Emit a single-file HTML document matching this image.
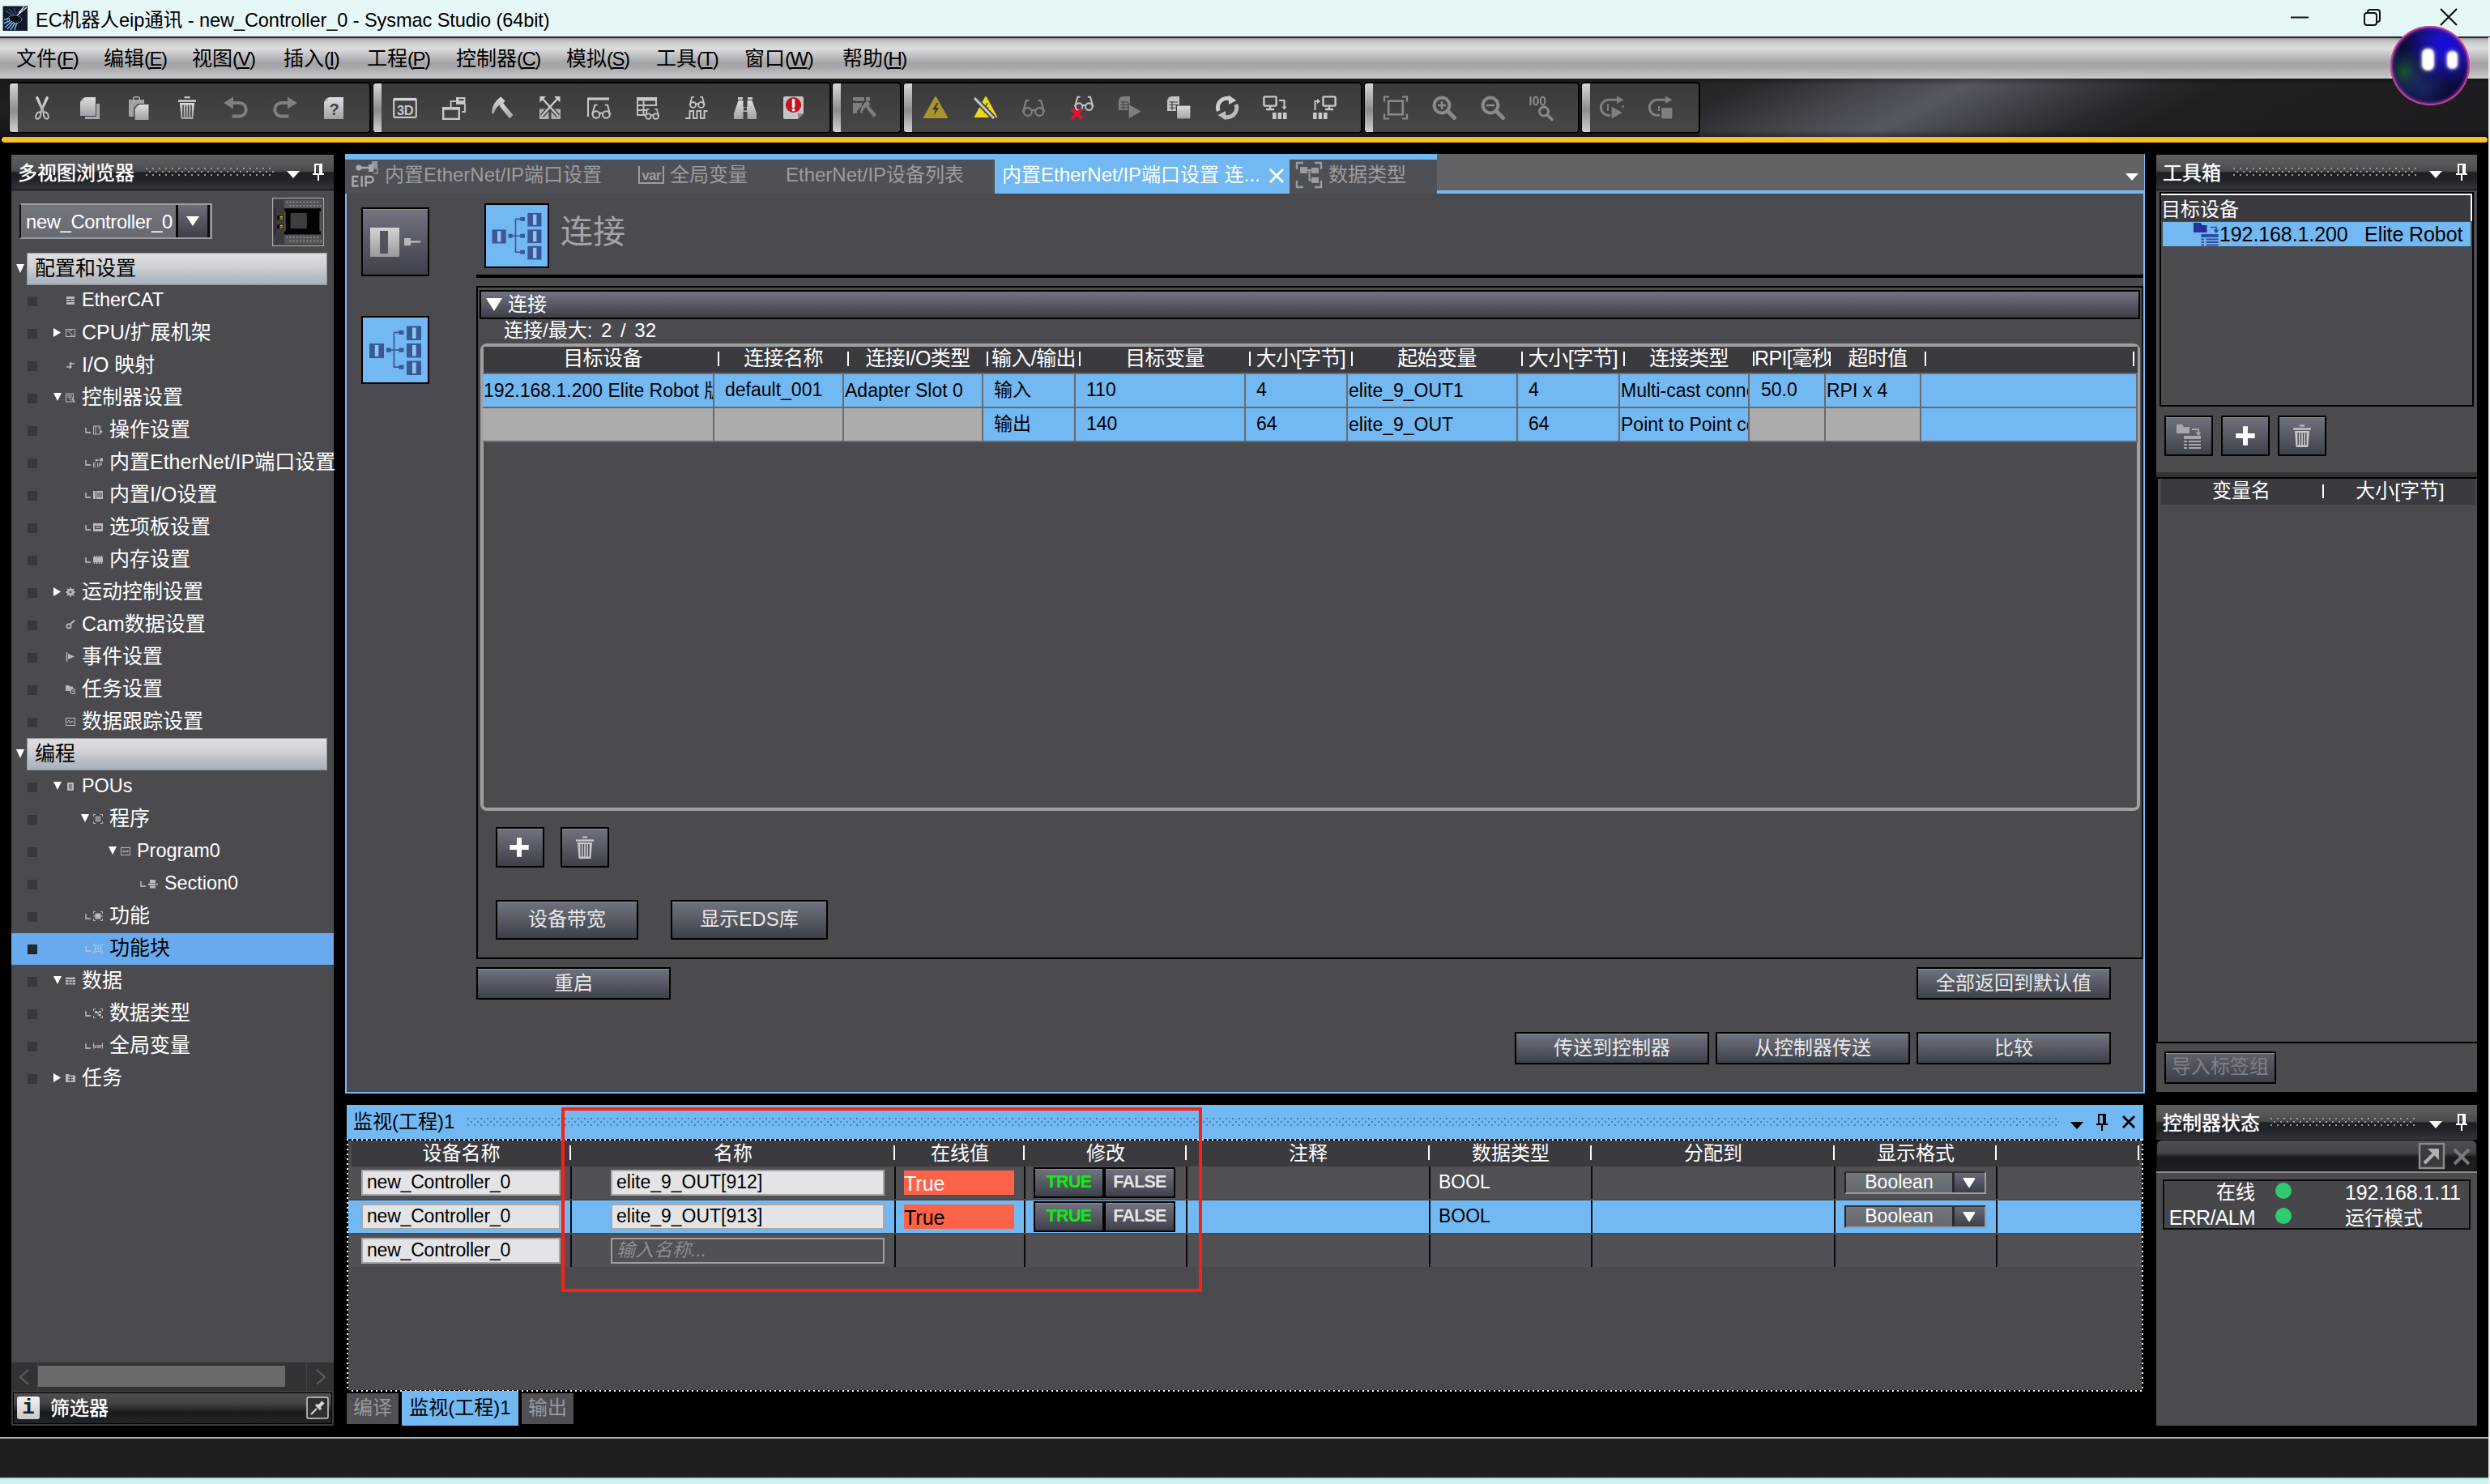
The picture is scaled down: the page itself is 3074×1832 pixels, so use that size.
<!DOCTYPE html>
<html lang="zh-CN"><head><meta charset="utf-8"><title>Sysmac Studio</title>
<style>
html,body{margin:0;padding:0;}
body{width:3074px;height:1832px;background:#000;overflow:hidden;position:relative;font-family:"Liberation Sans","Noto Sans CJK SC",sans-serif;font-size:24px;color:#fff;}
div,svg,span.a{position:absolute;box-sizing:border-box;}
.t{white-space:nowrap;overflow:visible;}
.c{text-align:center;}
.btn{background:linear-gradient(#70727e,#5a5c67 45%,#3e4049);border:2px solid #000;box-shadow:inset 0 1px 0 #8a8c98;color:#e8e8e8;text-align:center;white-space:nowrap;}
.hdr{background:linear-gradient(#5d5d61 0%,#56575a 25%,#494a4d 47%,#1c2022 52%,#22262a 75%,#32363a 100%);}

.sq{background:#38383c;width:12px;height:12px;}
.tree{font-size:24.6px;color:#fff;}
.gh{font-size:24px;color:#fff;text-align:center;}
.cell{color:#000;font-size:23px;overflow:hidden;white-space:nowrap;}
.inp{background:#e4e4e6;border:2px solid #a8a8a8;color:#000;font-size:23px;white-space:nowrap;overflow:hidden;}
</style></head><body>
<div style="left:0px;top:0px;width:3074px;height:46px;background:#e6f7f8;"></div>
<svg style="left:3px;top:7px;" width="31" height="31" viewBox="0 0 31 31"><rect x="0.5" y="0.5" width="31" height="31" fill="#10182a" stroke="#8a8f98"/>
<ellipse cx="15" cy="17" rx="9" ry="5" fill="#06080c" stroke="#5a7fb8" stroke-width="1"/>
<path d="M3 27 L12 19 M6 29 L14 20 M10 30 L16 21 M15 30 L18 21 M2 22 L10 18 M2 17 L9 16" stroke="#7fb4ea" stroke-width="1.4"/>
<path d="M30 2 L18 12 M27 1 L20 9" stroke="#dfe8f2" stroke-width="1.2"/>
<path d="M4 6 L12 12 M8 4 L14 11 M14 3 L17 10" stroke="#3a5a8a" stroke-width="1.2"/></svg>
<div class="t" style="left:44px;top:3px;height:44px;line-height:44px;color:#000;font-size:23.6px;letter-spacing:-0.1px;">EC机器人eip通讯 - new_Controller_0 - Sysmac Studio (64bit)</div>
<svg style="left:2820px;top:5px;" width="240" height="36" viewBox="0 0 240 36"><path d="M8 16.5 H30" stroke="#111" stroke-width="2"/>
<rect x="99" y="11" width="15" height="15" rx="3" fill="none" stroke="#111" stroke-width="2"/>
<path d="M103 11 V10 a3 3 0 0 1 3 -3 H115 a3 3 0 0 1 3 3 V19 a3 3 0 0 1 -3 3 H114" fill="none" stroke="#111" stroke-width="2"/>
<path d="M193 6 L213 26 M213 6 L193 26" stroke="#111" stroke-width="2.2"/></svg>
<div style="left:0px;top:45px;width:3074px;height:3px;background:#2a2a2c;"></div>
<div style="left:0px;top:47px;width:3072px;height:50px;background:linear-gradient(#8c8c8f 0%,#b9b9bc 4%,#d2d2d4 14%,#dcdcde 26%,#c0c0c3 44%,#a4a4a8 62%,#a6a6aa 70%,#bcbcbf 88%,#cbcbcd 100%);"></div>
<div class="t" style="left:20px;top:48px;height:48px;line-height:48px;color:#000;font-size:25px;">文件<span style="font-size:24px;letter-spacing:-1.5px;">(<u>F</u>)</span></div>
<div class="t" style="left:128px;top:48px;height:48px;line-height:48px;color:#000;font-size:25px;">编辑<span style="font-size:24px;letter-spacing:-1.5px;">(<u>E</u>)</span></div>
<div class="t" style="left:237px;top:48px;height:48px;line-height:48px;color:#000;font-size:25px;">视图<span style="font-size:24px;letter-spacing:-1.5px;">(<u>V</u>)</span></div>
<div class="t" style="left:350px;top:48px;height:48px;line-height:48px;color:#000;font-size:25px;">插入<span style="font-size:24px;letter-spacing:-1.5px;">(<u>I</u>)</span></div>
<div class="t" style="left:453px;top:48px;height:48px;line-height:48px;color:#000;font-size:25px;">工程<span style="font-size:24px;letter-spacing:-1.5px;">(<u>P</u>)</span></div>
<div class="t" style="left:563px;top:48px;height:48px;line-height:48px;color:#000;font-size:25px;">控制器<span style="font-size:24px;letter-spacing:-1.5px;">(<u>C</u>)</span></div>
<div class="t" style="left:699px;top:48px;height:48px;line-height:48px;color:#000;font-size:25px;">模拟<span style="font-size:24px;letter-spacing:-1.5px;">(<u>S</u>)</span></div>
<div class="t" style="left:810px;top:48px;height:48px;line-height:48px;color:#000;font-size:25px;">工具<span style="font-size:24px;letter-spacing:-1.5px;">(<u>T</u>)</span></div>
<div class="t" style="left:919px;top:48px;height:48px;line-height:48px;color:#000;font-size:25px;">窗口<span style="font-size:24px;letter-spacing:-1.5px;">(<u>W</u>)</span></div>
<div class="t" style="left:1040px;top:48px;height:48px;line-height:48px;color:#000;font-size:25px;">帮助<span style="font-size:24px;letter-spacing:-1.5px;">(<u>H</u>)</span></div>
<div style="left:0px;top:97px;width:3072px;height:72px;background:linear-gradient(#1a1a1c,#202022 50%,#161618);"></div>
<div style="left:2098px;top:97px;width:974px;height:72px;background:linear-gradient(154deg,#232426 0%,#28292c 7%,#43454b 20%,#565860 31%,#3d3f45 42%,#28292c 52%,#202022 60%,#1d1d1f 100%);"></div>
<div style="left:2098px;top:97px;width:974px;height:72px;background:linear-gradient(rgba(0,0,0,.3),rgba(0,0,0,0) 12%,rgba(0,0,0,0) 88%,rgba(0,0,0,.35));"></div>
<div style="left:11px;top:101px;width:447px;height:64px;background:linear-gradient(#3a3a3a,#474747);border:2px solid #000;border-radius:5px;box-shadow:0 1px 0 #2c2c2c;"></div>
<div style="left:12px;top:103px;width:10px;height:60px;background:linear-gradient(#d6d6d6,#9a9a9a 45%,#8c8c8c 55%,#cfcfcf);border-radius:3px 0 0 3px;"></div>
<div style="left:460px;top:101px;width:566px;height:64px;background:linear-gradient(#3a3a3a,#474747);border:2px solid #000;border-radius:5px;box-shadow:0 1px 0 #2c2c2c;"></div>
<div style="left:461px;top:103px;width:10px;height:60px;background:linear-gradient(#d6d6d6,#9a9a9a 45%,#8c8c8c 55%,#cfcfcf);border-radius:3px 0 0 3px;"></div>
<div style="left:1027px;top:101px;width:86px;height:64px;background:linear-gradient(#3a3a3a,#474747);border:2px solid #000;border-radius:5px;box-shadow:0 1px 0 #2c2c2c;"></div>
<div style="left:1028px;top:103px;width:10px;height:60px;background:linear-gradient(#d6d6d6,#9a9a9a 45%,#8c8c8c 55%,#cfcfcf);border-radius:3px 0 0 3px;"></div>
<div style="left:1115px;top:101px;width:567px;height:64px;background:linear-gradient(#3a3a3a,#474747);border:2px solid #000;border-radius:5px;box-shadow:0 1px 0 #2c2c2c;"></div>
<div style="left:1116px;top:103px;width:10px;height:60px;background:linear-gradient(#d6d6d6,#9a9a9a 45%,#8c8c8c 55%,#cfcfcf);border-radius:3px 0 0 3px;"></div>
<div style="left:1684px;top:101px;width:266px;height:64px;background:linear-gradient(#3a3a3a,#474747);border:2px solid #000;border-radius:5px;box-shadow:0 1px 0 #2c2c2c;"></div>
<div style="left:1685px;top:103px;width:10px;height:60px;background:linear-gradient(#d6d6d6,#9a9a9a 45%,#8c8c8c 55%,#cfcfcf);border-radius:3px 0 0 3px;"></div>
<div style="left:1952px;top:101px;width:147px;height:64px;background:linear-gradient(#3a3a3a,#474747);border:2px solid #000;border-radius:5px;box-shadow:0 1px 0 #2c2c2c;"></div>
<div style="left:1953px;top:103px;width:10px;height:60px;background:linear-gradient(#d6d6d6,#9a9a9a 45%,#8c8c8c 55%,#cfcfcf);border-radius:3px 0 0 3px;"></div>
<div style="left:2px;top:169px;width:3069px;height:7px;background:linear-gradient(#f2b51f,#fcc32c 40%,#f7bb26);border-radius:4px;"></div>
<div style="left:2951px;top:32px;width:98px;height:98px;border-radius:50%;background:radial-gradient(circle at 70% 24%,#1a0ce0 0%,#1a10c0 14%,#14108a 30%,#0c0c3c 48%,#0a0a30 64%,#12104a 100%);"></div>
<div style="left:2951px;top:32px;width:98px;height:98px;border-radius:50%;background:radial-gradient(circle at 18% 58%,rgba(30,110,40,.75) 0%,rgba(30,80,80,.4) 14%,rgba(0,0,0,0) 30%);"></div>
<div style="left:2951px;top:32px;width:98px;height:98px;border-radius:50%;background:radial-gradient(circle at 40% 78%,rgba(40,60,140,.55) 0%,rgba(0,0,0,0) 34%);"></div>
<div style="left:2951px;top:32px;width:98px;height:98px;border-radius:50%;background:radial-gradient(closest-side,rgba(0,0,0,0) 87%,rgba(120,30,180,.4) 93%,rgba(226,70,170,.85) 98%,rgba(240,110,130,.9) 100%);"></div>
<div style="left:2951px;top:32px;width:98px;height:98px;border-radius:50%;background:linear-gradient(100deg,rgba(230,80,40,.5) 0%,rgba(0,0,0,0) 9%);"></div>
<div style="left:2990px;top:60px;width:15px;height:27px;background:#fff;border-radius:7px;filter:blur(1px);box-shadow:0 0 4px 1px rgba(255,255,255,.5);"></div>
<div style="left:3021px;top:63px;width:13px;height:22px;background:#fff;border-radius:6px;filter:blur(1px);box-shadow:0 0 4px 1px rgba(255,255,255,.5);"></div>
<div class="hdr" style="left:14px;top:191px;width:398px;height:43px;"></div>
<div class="t" style="left:22px;top:194px;height:40px;line-height:40px;font-size:24px;color:#fff;text-shadow:0 0 1px #fff;">多视图浏览器</div>
<svg style="left:180px;top:207px" width="160" height="10" viewBox="0 0 160 10"><defs><pattern id="dp1" width="8" height="8" patternUnits="userSpaceOnUse"><rect x="0" y="0" width="2" height="2" fill="#9a9a9a"/><rect x="4" y="4" width="2" height="2" fill="#9a9a9a"/></pattern></defs><rect width="160" height="10" fill="url(#dp1)"/></svg>
<svg style="left:354px;top:211px;" width="16" height="9" viewBox="0 0 16 9"><path d="M0 0 H16 L8 9 Z" fill="#fff"/></svg>
<svg style="left:386px;top:202px;" width="14" height="21" viewBox="0 0 14 21"><path d="M2 0 H12 V12 H14 V14 H8 V21 H6 V14 H0 V12 H2 Z M4 2 V12 H8 V2 Z" fill="#fff" fill-rule="evenodd"/></svg>
<div style="left:14px;top:235px;width:398px;height:1447px;background:#4b4b4f;"></div>
<div style="left:24px;top:251px;width:238px;height:44px;background:#6e7078;border:2px solid #9a9aa0;border-left-color:#0c0c0e;"></div>
<div style="left:26px;top:253px;width:191px;height:40px;background:linear-gradient(#74767e,#686a72);"></div>
<div style="left:217px;top:253px;width:3px;height:40px;background:#0c0c0e;"></div>
<div style="left:256px;top:253px;width:3px;height:40px;background:#0c0c0e;"></div>
<div style="left:220px;top:253px;width:36px;height:40px;background:linear-gradient(#6c6e7a,#3c3e48);"></div>
<svg style="left:230px;top:267px;" width="16" height="12" viewBox="0 0 16 12"><path d="M0 0 H16 L8 12 Z" fill="#fff"/></svg>
<div class="t" style="left:32px;top:253px;height:41px;line-height:41px;font-size:23.8px;color:#fff;letter-spacing:-0.35px;">new_Controller_0</div>
<svg style="left:336px;top:244px;" width="64" height="60" viewBox="0 0 64 60"><rect x="0.75" y="0.75" width="62.5" height="58.5" fill="#555558" stroke="#a9a9a9" stroke-width="1.5"/>
<rect x="2" y="2" width="60" height="56" fill="none" stroke="#2a2a2c" stroke-width="1"/>
<rect x="2.5" y="2.5" width="12.5" height="55" fill="#3c3c3e"/>
<path d="M2.5 12 L4.5 14 V45 L2.5 47 Z" fill="#2a2a2c"/>
<rect x="17.5" y="4.6" width="1.8" height="1.8" fill="#8e8e92"/><rect x="21.7" y="4.6" width="1.8" height="1.8" fill="#8e8e92"/><rect x="25.9" y="4.6" width="1.8" height="1.8" fill="#8e8e92"/><rect x="30.1" y="4.6" width="1.8" height="1.8" fill="#8e8e92"/><rect x="34.3" y="4.6" width="1.8" height="1.8" fill="#8e8e92"/><rect x="38.5" y="4.6" width="1.8" height="1.8" fill="#8e8e92"/><rect x="42.7" y="4.6" width="1.8" height="1.8" fill="#8e8e92"/><rect x="46.9" y="4.6" width="1.8" height="1.8" fill="#8e8e92"/><rect x="51.1" y="4.6" width="1.8" height="1.8" fill="#8e8e92"/><rect x="55.3" y="4.6" width="1.8" height="1.8" fill="#8e8e92"/><rect x="17.5" y="48.2" width="1.8" height="1.8" fill="#8e8e92"/><rect x="21.7" y="48.2" width="1.8" height="1.8" fill="#8e8e92"/><rect x="25.9" y="48.2" width="1.8" height="1.8" fill="#8e8e92"/><rect x="30.1" y="48.2" width="1.8" height="1.8" fill="#8e8e92"/><rect x="34.3" y="48.2" width="1.8" height="1.8" fill="#8e8e92"/><rect x="38.5" y="48.2" width="1.8" height="1.8" fill="#8e8e92"/><rect x="42.7" y="48.2" width="1.8" height="1.8" fill="#8e8e92"/><rect x="46.9" y="48.2" width="1.8" height="1.8" fill="#8e8e92"/><rect x="51.1" y="48.2" width="1.8" height="1.8" fill="#8e8e92"/><rect x="55.3" y="48.2" width="1.8" height="1.8" fill="#8e8e92"/><rect x="21.5" y="9" width="1.8" height="1.8" fill="#8e8e92"/><rect x="25.7" y="9" width="1.8" height="1.8" fill="#8e8e92"/><rect x="29.9" y="9" width="1.8" height="1.8" fill="#8e8e92"/><rect x="34.1" y="9" width="1.8" height="1.8" fill="#8e8e92"/><rect x="38.3" y="9" width="1.8" height="1.8" fill="#8e8e92"/><rect x="42.5" y="9" width="1.8" height="1.8" fill="#8e8e92"/><rect x="46.7" y="9" width="1.8" height="1.8" fill="#8e8e92"/><rect x="50.9" y="9" width="1.8" height="1.8" fill="#8e8e92"/><rect x="55.1" y="9" width="1.8" height="1.8" fill="#8e8e92"/><rect x="59.3" y="9" width="1.8" height="1.8" fill="#8e8e92"/><rect x="21.5" y="52.6" width="1.8" height="1.8" fill="#8e8e92"/><rect x="25.7" y="52.6" width="1.8" height="1.8" fill="#8e8e92"/><rect x="29.9" y="52.6" width="1.8" height="1.8" fill="#8e8e92"/><rect x="34.1" y="52.6" width="1.8" height="1.8" fill="#8e8e92"/><rect x="38.3" y="52.6" width="1.8" height="1.8" fill="#8e8e92"/><rect x="42.5" y="52.6" width="1.8" height="1.8" fill="#8e8e92"/><rect x="46.7" y="52.6" width="1.8" height="1.8" fill="#8e8e92"/><rect x="50.9" y="52.6" width="1.8" height="1.8" fill="#8e8e92"/><rect x="55.1" y="52.6" width="1.8" height="1.8" fill="#8e8e92"/><rect x="59.3" y="52.6" width="1.8" height="1.8" fill="#8e8e92"/>
<path d="M15 13.2 H60 V17 H58.4 V41.4 H60 V45.4 H15 V41.4 H16.6 V17 H15 Z" fill="#020202"/>
<rect x="22.6" y="19" width="20.2" height="19.2" fill="#3e3e40"/>
<rect x="6" y="22.4" width="7.4" height="5" fill="#0a0a0a"/><rect x="6" y="33.2" width="7.4" height="5" fill="#0a0a0a"/>
<rect x="9.4" y="23" width="3.6" height="1.6" fill="#e6c21e"/><rect x="9.4" y="25.4" width="3.6" height="1.4" fill="#c8a818"/>
<rect x="9.4" y="33.8" width="3.6" height="1.6" fill="#e6c21e"/><rect x="9.4" y="36.2" width="3.6" height="1.4" fill="#c8a818"/></svg>
<svg style="left:20px;top:326px;" width="10" height="11" viewBox="0 0 10 11"><path d="M0 0 H10 L5 11 Z" fill="#fff"/></svg>
<div style="left:33px;top:312px;width:371px;height:40px;background:linear-gradient(#dddee0,#d0d2d6 40%,#b6bcc4 75%,#a9b1bb 100%);border:1px solid #8f939a;"></div>
<div class="t" style="left:43px;top:312px;height:38px;line-height:38px;color:#000;font-size:25px;">配置和设置</div>
<div style="left:34px;top:366px;width:12px;height:12px;background:#38383c;"></div>
<svg style="left:81px;top:365px;" width="12" height="12" viewBox="0 0 12 12"><rect x="1" y="1" width="10" height="3" fill="#b9b9bd"/><rect x="1" y="5" width="4" height="2" fill="#b9b9bd"/><rect x="6" y="5" width="5" height="2" fill="#b9b9bd"/><rect x="1" y="8" width="10" height="3" fill="#b9b9bd"/></svg>
<div class="t" style="left:101px;top:350px;height:40px;line-height:40px;font-size:23.4px;color:#fff;">EtherCAT</div>
<div style="left:34px;top:406px;width:12px;height:12px;background:#38383c;"></div>
<svg style="left:81px;top:405px;" width="12" height="12" viewBox="0 0 12 12"><rect x="0.5" y="1.5" width="11" height="9" fill="none" stroke="#b9b9bd"/><path d="M2 3 L8 8 M4 3 H8 M6 9 H10" stroke="#b9b9bd"/></svg>
<svg style="left:66px;top:405px;" width="9" height="11" viewBox="0 0 9 11"><path d="M0 0 V11 L9 5.5 Z" fill="#fff"/></svg>
<div class="t" style="left:101px;top:390px;height:40px;line-height:40px;font-size:25px;color:#fff;">CPU/扩展机架</div>
<div style="left:34px;top:446px;width:12px;height:12px;background:#38383c;"></div>
<svg style="left:81px;top:445px;" width="12" height="12" viewBox="0 0 12 12"><path d="M1 8 H7 M5 6 L7 8 L5 10 M11 4 H5 M7 2 L5 4 L7 6" stroke="#b9b9bd" stroke-width="1.4" fill="none"/></svg>
<div class="t" style="left:101px;top:430px;height:40px;line-height:40px;font-size:25px;color:#fff;">I/O 映射</div>
<div style="left:34px;top:486px;width:12px;height:12px;background:#38383c;"></div>
<svg style="left:81px;top:485px;" width="12" height="12" viewBox="0 0 12 12"><rect x="0.5" y="1" width="9" height="10" fill="none" stroke="#b9b9bd"/><path d="M2 3 H8 M2 5 H6" stroke="#b9b9bd"/><circle cx="7" cy="7" r="2" fill="none" stroke="#b9b9bd"/><path d="M8.5 8.5 L11.5 11.5" stroke="#b9b9bd" stroke-width="1.5"/></svg>
<svg style="left:66px;top:485px;" width="10" height="10" viewBox="0 0 10 10"><path d="M0 0 H10 L5 10 Z" fill="#fff"/></svg>
<div class="t" style="left:101px;top:470px;height:40px;line-height:40px;font-size:25px;color:#fff;">控制器设置</div>
<div style="left:34px;top:526px;width:12px;height:12px;background:#38383c;"></div>
<svg style="left:115px;top:525px;" width="12" height="12" viewBox="0 0 12 12"><rect x="0.5" y="1" width="8" height="10" fill="none" stroke="#b9b9bd"/><path d="M3 1 V11 M5.5 3 H8" stroke="#b9b9bd"/><path d="M8 5 L12 8 L8 11 Z" fill="#b9b9bd"/></svg>
<svg style="left:105px;top:528px;" width="7" height="7" viewBox="0 0 7 7"><path d="M1 0 V6 H7" stroke="#c8c8c8" stroke-width="1.3" fill="none"/></svg>
<div class="t" style="left:135px;top:510px;height:40px;line-height:40px;font-size:25px;color:#fff;">操作设置</div>
<div style="left:34px;top:566px;width:12px;height:12px;background:#38383c;"></div>
<svg style="left:115px;top:565px;" width="12" height="12" viewBox="0 0 12 12"><path d="M5 3 H9 M9 1 h3 v3 h-3 z" stroke="#b9b9bd" fill="#b9b9bd"/><circle cx="4" cy="3" r="1.5" fill="#b9b9bd"/><path d="M0.5 6.5 H3.5 M0.5 9 H3 M0.5 11.5 H3.5 M0.5 6.5 V11.5 M5.5 6.5 V11.5 M7.5 11.5 V6.5 H10.5 V9 H7.5" stroke="#b9b9bd" fill="none"/></svg>
<svg style="left:105px;top:568px;" width="7" height="7" viewBox="0 0 7 7"><path d="M1 0 V6 H7" stroke="#c8c8c8" stroke-width="1.3" fill="none"/></svg>
<div class="t" style="left:135px;top:550px;height:40px;line-height:40px;font-size:25px;color:#fff;">内置EtherNet/IP端口设置</div>
<div style="left:34px;top:606px;width:12px;height:12px;background:#38383c;"></div>
<svg style="left:115px;top:605px;" width="12" height="12" viewBox="0 0 12 12"><rect x="0" y="1" width="3" height="10" fill="#b9b9bd"/><rect x="4" y="1" width="8" height="10" fill="#b9b9bd"/><path d="M5 4 H11 M5 6 H11 M5 8 H11" stroke="#4b4b4f"/></svg>
<svg style="left:105px;top:608px;" width="7" height="7" viewBox="0 0 7 7"><path d="M1 0 V6 H7" stroke="#c8c8c8" stroke-width="1.3" fill="none"/></svg>
<div class="t" style="left:135px;top:590px;height:40px;line-height:40px;font-size:25px;color:#fff;">内置I/O设置</div>
<div style="left:34px;top:646px;width:12px;height:12px;background:#38383c;"></div>
<svg style="left:115px;top:645px;" width="12" height="12" viewBox="0 0 12 12"><rect x="0" y="1" width="12" height="10" fill="#b9b9bd"/><rect x="2" y="4" width="8" height="4" fill="#4b4b4f"/><rect x="3.5" y="5.2" width="5" height="1.6" fill="#b9b9bd"/></svg>
<svg style="left:105px;top:648px;" width="7" height="7" viewBox="0 0 7 7"><path d="M1 0 V6 H7" stroke="#c8c8c8" stroke-width="1.3" fill="none"/></svg>
<div class="t" style="left:135px;top:630px;height:40px;line-height:40px;font-size:25px;color:#fff;">选项板设置</div>
<div style="left:34px;top:686px;width:12px;height:12px;background:#38383c;"></div>
<svg style="left:115px;top:685px;" width="12" height="12" viewBox="0 0 12 12"><rect x="0" y="3" width="12" height="6" fill="#b9b9bd"/><path d="M1.5 1 V3 M4.5 1 V3 M7.5 1 V3 M10.5 1 V3 M1.5 9 V11 M4.5 9 V11 M7.5 9 V11 M10.5 9 V11" stroke="#b9b9bd" stroke-width="1.6"/></svg>
<svg style="left:105px;top:688px;" width="7" height="7" viewBox="0 0 7 7"><path d="M1 0 V6 H7" stroke="#c8c8c8" stroke-width="1.3" fill="none"/></svg>
<div class="t" style="left:135px;top:670px;height:40px;line-height:40px;font-size:25px;color:#fff;">内存设置</div>
<div style="left:34px;top:726px;width:12px;height:12px;background:#38383c;"></div>
<svg style="left:81px;top:725px;" width="12" height="12" viewBox="0 0 12 12"><circle cx="6" cy="6" r="3.4" fill="none" stroke="#b9b9bd" stroke-width="2"/><path d="M6 0 V12 M0 6 H12 M1.8 1.8 L10.2 10.2 M10.2 1.8 L1.8 10.2" stroke="#b9b9bd" stroke-width="1.5"/><circle cx="6" cy="6" r="1.4" fill="#4b4b4f"/></svg>
<svg style="left:66px;top:725px;" width="9" height="11" viewBox="0 0 9 11"><path d="M0 0 V11 L9 5.5 Z" fill="#fff"/></svg>
<div class="t" style="left:101px;top:710px;height:40px;line-height:40px;font-size:25px;color:#fff;">运动控制设置</div>
<div style="left:34px;top:766px;width:12px;height:12px;background:#38383c;"></div>
<svg style="left:81px;top:765px;" width="12" height="12" viewBox="0 0 12 12"><circle cx="4" cy="8" r="2.6" fill="none" stroke="#b9b9bd" stroke-width="1.8"/><path d="M5 6 L11 1" stroke="#b9b9bd" stroke-width="1.8"/></svg>
<div class="t" style="left:101px;top:750px;height:40px;line-height:40px;font-size:25px;color:#fff;">Cam数据设置</div>
<div style="left:34px;top:806px;width:12px;height:12px;background:#38383c;"></div>
<svg style="left:81px;top:805px;" width="12" height="12" viewBox="0 0 12 12"><path d="M1.5 0 V12" stroke="#b9b9bd" stroke-width="1.4"/><path d="M3 2 L11 5.5 L3 9 Z" fill="#b9b9bd"/></svg>
<div class="t" style="left:101px;top:790px;height:40px;line-height:40px;font-size:25px;color:#fff;">事件设置</div>
<div style="left:34px;top:846px;width:12px;height:12px;background:#38383c;"></div>
<svg style="left:81px;top:845px;" width="12" height="12" viewBox="0 0 12 12"><path d="M0 1 H4 L5 2.5 H9 V8 H0 Z" fill="#b9b9bd"/><circle cx="9" cy="8.5" r="3" fill="#4b4b4f" stroke="#b9b9bd" stroke-width="1.2"/><path d="M9 7 V8.7 H10.4" stroke="#b9b9bd" fill="none"/></svg>
<div class="t" style="left:101px;top:830px;height:40px;line-height:40px;font-size:25px;color:#fff;">任务设置</div>
<div style="left:34px;top:886px;width:12px;height:12px;background:#38383c;"></div>
<svg style="left:81px;top:885px;" width="12" height="12" viewBox="0 0 12 12"><rect x="0.5" y="1.5" width="11" height="9" fill="none" stroke="#b9b9bd"/><path d="M2 7 L4 4 L6 8 L8 5 L10 7" stroke="#b9b9bd" fill="none"/></svg>
<div class="t" style="left:101px;top:870px;height:40px;line-height:40px;font-size:25px;color:#fff;">数据跟踪设置</div>
<svg style="left:20px;top:925px;" width="10" height="11" viewBox="0 0 10 11"><path d="M0 0 H10 L5 11 Z" fill="#fff"/></svg>
<div style="left:33px;top:911px;width:371px;height:40px;background:linear-gradient(#dddee0,#d0d2d6 40%,#b6bcc4 75%,#a9b1bb 100%);border:1px solid #8f939a;"></div>
<div class="t" style="left:43px;top:911px;height:38px;line-height:38px;color:#000;font-size:25px;">编程</div>
<div style="left:34px;top:966px;width:12px;height:12px;background:#38383c;"></div>
<svg style="left:81px;top:965px;" width="12" height="12" viewBox="0 0 12 12"><rect x="2" y="1" width="8" height="10" rx="1" fill="#b9b9bd"/><path d="M4 4 H8 M4 6 H8 M4 8 H8" stroke="#4b4b4f"/></svg>
<svg style="left:66px;top:965px;" width="10" height="10" viewBox="0 0 10 10"><path d="M0 0 H10 L5 10 Z" fill="#fff"/></svg>
<div class="t" style="left:101px;top:950px;height:40px;line-height:40px;font-size:23.4px;color:#fff;">POUs</div>
<div style="left:34px;top:1006px;width:12px;height:12px;background:#38383c;"></div>
<svg style="left:115px;top:1005px;" width="12" height="12" viewBox="0 0 12 12"><path d="M0.5 3 V0.5 H3 M9 0.5 H11.5 V3 M0.5 9 V11.5 H3 M9 11.5 H11.5 V9" stroke="#b9b9bd" fill="none"/><rect x="3" y="3" width="6" height="6" fill="#b9b9bd"/><path d="M4 5 H8 M4 7 H8" stroke="#4b4b4f"/></svg>
<svg style="left:100px;top:1005px;" width="10" height="10" viewBox="0 0 10 10"><path d="M0 0 H10 L5 10 Z" fill="#fff"/></svg>
<div class="t" style="left:135px;top:990px;height:40px;line-height:40px;font-size:25px;color:#fff;">程序</div>
<div style="left:34px;top:1046px;width:12px;height:12px;background:#38383c;"></div>
<svg style="left:149px;top:1045px;" width="12" height="12" viewBox="0 0 12 12"><rect x="0.5" y="1.5" width="11" height="9" fill="none" stroke="#b9b9bd"/><path d="M2 6 H10 M4 4.5 V7.5 M8 4.5 V7.5" stroke="#b9b9bd"/></svg>
<svg style="left:134px;top:1045px;" width="10" height="10" viewBox="0 0 10 10"><path d="M0 0 H10 L5 10 Z" fill="#fff"/></svg>
<div class="t" style="left:169px;top:1030px;height:40px;line-height:40px;font-size:23.4px;color:#fff;">Program0</div>
<div style="left:34px;top:1086px;width:12px;height:12px;background:#38383c;"></div>
<svg style="left:183px;top:1085px;" width="12" height="12" viewBox="0 0 12 12"><rect x="2" y="1" width="7" height="4" fill="#b9b9bd"/><rect x="0" y="5.5" width="9" height="2.5" fill="#b9b9bd"/><rect x="2" y="8.5" width="7" height="3" fill="#b9b9bd"/><rect x="10" y="5.5" width="2" height="2" fill="#b9b9bd"/></svg>
<svg style="left:173px;top:1088px;" width="7" height="7" viewBox="0 0 7 7"><path d="M1 0 V6 H7" stroke="#c8c8c8" stroke-width="1.3" fill="none"/></svg>
<div class="t" style="left:203px;top:1070px;height:40px;line-height:40px;font-size:23.4px;color:#fff;">Section0</div>
<div style="left:34px;top:1126px;width:12px;height:12px;background:#38383c;"></div>
<svg style="left:115px;top:1125px;" width="12" height="12" viewBox="0 0 12 12"><path d="M0.5 3 V0.5 H3 M9 0.5 H11.5 V3 M0.5 9 V11.5 H3 M9 11.5 H11.5 V9" stroke="#b9b9bd" fill="none"/><rect x="2.5" y="2.5" width="7" height="7" fill="#b9b9bd"/><path d="M0 6 H3 M9 6 H12" stroke="#b9b9bd"/></svg>
<svg style="left:105px;top:1128px;" width="7" height="7" viewBox="0 0 7 7"><path d="M1 0 V6 H7" stroke="#c8c8c8" stroke-width="1.3" fill="none"/></svg>
<div class="t" style="left:135px;top:1110px;height:40px;line-height:40px;font-size:25px;color:#fff;">功能</div>
<div style="left:14px;top:1152px;width:398px;height:39px;background:#68aaee;"></div>
<div style="left:34px;top:1166px;width:12px;height:12px;background:#26262a;"></div>
<svg style="left:115px;top:1165px;" width="12" height="12" viewBox="0 0 12 12"><path d="M0.5 3 V0.5 H3 M9 0.5 H11.5 V3 M0.5 9 V11.5 H3 M9 11.5 H11.5 V9" stroke="#9cc4ec" fill="none"/><rect x="2.5" y="2.5" width="7" height="7" fill="none" stroke="#9cc4ec" stroke-width="1.4"/><circle cx="6" cy="6" r="1.6" fill="#9cc4ec"/></svg>
<svg style="left:105px;top:1168px;" width="7" height="7" viewBox="0 0 7 7"><path d="M1 0 V6 H7" stroke="#c8c8c8" stroke-width="1.3" fill="none"/></svg>
<div class="t" style="left:135px;top:1150px;height:40px;line-height:40px;font-size:25px;color:#000;">功能块</div>
<div style="left:34px;top:1206px;width:12px;height:12px;background:#38383c;"></div>
<svg style="left:81px;top:1205px;" width="12" height="12" viewBox="0 0 12 12"><rect x="0" y="1.5" width="12" height="9" fill="#b9b9bd"/><path d="M0 4.5 H12 M0 7.5 H12 M4 4.5 V10.5 M8 4.5 V10.5" stroke="#4b4b4f"/></svg>
<svg style="left:66px;top:1205px;" width="10" height="10" viewBox="0 0 10 10"><path d="M0 0 H10 L5 10 Z" fill="#fff"/></svg>
<div class="t" style="left:101px;top:1190px;height:40px;line-height:40px;font-size:25px;color:#fff;">数据</div>
<div style="left:34px;top:1246px;width:12px;height:12px;background:#38383c;"></div>
<svg style="left:115px;top:1245px;" width="12" height="12" viewBox="0 0 12 12"><path d="M0.5 3 V0.5 H3 M9 0.5 H11.5 V3 M0.5 9 V11.5 H3 M9 11.5 H11.5 V9" stroke="#b9b9bd" fill="none"/><rect x="2" y="3" width="3" height="3" fill="#b9b9bd"/><rect x="7" y="3" width="3" height="2.5" fill="#b9b9bd"/><rect x="7" y="7" width="3" height="2.5" fill="#b9b9bd"/><path d="M5 4.5 H7 M6 4.5 V8.2 H7" stroke="#b9b9bd" fill="none"/></svg>
<svg style="left:105px;top:1248px;" width="7" height="7" viewBox="0 0 7 7"><path d="M1 0 V6 H7" stroke="#c8c8c8" stroke-width="1.3" fill="none"/></svg>
<div class="t" style="left:135px;top:1230px;height:40px;line-height:40px;font-size:25px;color:#fff;">数据类型</div>
<div style="left:34px;top:1286px;width:12px;height:12px;background:#38383c;"></div>
<svg style="left:115px;top:1285px;" width="12" height="12" viewBox="0 0 12 12"><path d="M0.5 2.5 V9.5 M11.5 2.5 V9.5" stroke="#b9b9bd"/><text x="6" y="8.6" font-size="6.5" font-weight="bold" text-anchor="middle" fill="#b9b9bd" font-family="Liberation Sans,sans-serif">var</text></svg>
<svg style="left:105px;top:1288px;" width="7" height="7" viewBox="0 0 7 7"><path d="M1 0 V6 H7" stroke="#c8c8c8" stroke-width="1.3" fill="none"/></svg>
<div class="t" style="left:135px;top:1270px;height:40px;line-height:40px;font-size:25px;color:#fff;">全局变量</div>
<div style="left:34px;top:1326px;width:12px;height:12px;background:#38383c;"></div>
<svg style="left:81px;top:1325px;" width="12" height="12" viewBox="0 0 12 12"><path d="M0 1 H4 L5 2.5 H12 V11 H0 Z" fill="#b9b9bd"/><path d="M3 5 H9 M3 8 H9 M6 4 V10" stroke="#4b4b4f" stroke-width="1.3"/></svg>
<svg style="left:66px;top:1325px;" width="9" height="11" viewBox="0 0 9 11"><path d="M0 0 V11 L9 5.5 Z" fill="#fff"/></svg>
<div class="t" style="left:101px;top:1310px;height:40px;line-height:40px;font-size:25px;color:#fff;">任务</div>
<div style="left:14px;top:1682px;width:398px;height:35px;background:#333336;"></div>
<div style="left:47px;top:1686px;width:305px;height:26px;background:#6b6b6b;"></div>
<div style="left:46px;top:1682px;width:1px;height:35px;background:#444;"></div>
<div style="left:378px;top:1682px;width:1px;height:35px;background:#444;"></div>
<svg style="left:24px;top:1690px;" width="12" height="20" viewBox="0 0 12 20"><path d="M11 1 L1 10 L11 19" stroke="#5c5c5c" stroke-width="2" fill="none"/></svg>
<svg style="left:390px;top:1690px;" width="12" height="20" viewBox="0 0 12 20"><path d="M1 1 L11 10 L1 19" stroke="#5c5c5c" stroke-width="2" fill="none"/></svg>
<div style="left:14px;top:1717px;width:398px;height:43px;background:linear-gradient(#4e4f52 0%,#424346 35%,#191c1e 62%,#202426 100%);border:2px solid #3c3c3e;box-shadow:inset 0 0 0 1px #000;"></div>
<div style="left:21px;top:1724px;width:28px;height:28px;background:linear-gradient(#f2f2f2,#c8c8c8);border-radius:3px;"></div>
<div class="t" style="left:21px;top:1724px;height:28px;line-height:28px;width:28px;text-align:center;color:#222;font-family:&quot;Liberation Mono&quot;,monospace;font-weight:bold;font-size:26px;">i</div>
<div class="t" style="left:62px;top:1718px;height:42px;line-height:42px;font-size:24px;color:#fff;text-shadow:0 0 1px #fff;">筛选器</div>
<svg style="left:378px;top:1724px;" width="28" height="28" viewBox="0 0 28 28"><rect x="1" y="1" width="26" height="26" rx="2" fill="#2e2f32" stroke="#d0d0d0" stroke-width="1.5"/><path d="M6 22 L13 15" stroke="#d8d8d8" stroke-width="2"/><path d="M11 11 L17 17 L19 15 L18 13 L22 9 L23 9 L19 5 L19 6 L15 10 L13 9 Z" fill="#d8d8d8"/></svg>
<div style="left:426px;top:190px;width:2222px;height:1160px;background:#4b4b4f;border:2px solid #72b8f3;"></div>
<div style="left:426px;top:190px;width:2221px;height:49px;background:#636366;"></div>
<div style="left:426px;top:190px;width:1348px;height:49px;background:#4f5055;"></div>
<div style="left:426px;top:190px;width:1348px;height:7px;background:#72b8f3;"></div>
<div style="left:1774px;top:235px;width:873px;height:4px;background:#72b8f3;"></div>
<div style="left:1228px;top:196px;width:364px;height:43px;background:#72b8f3;"></div>
<svg style="left:434px;top:199px;" width="33" height="32" viewBox="0 0 33 32"><circle cx="9" cy="8" r="3.6" fill="#a9a9ad"/><path d="M9 8 H22" stroke="#a9a9ad" stroke-width="2.6"/>
<path d="M21 4 H27 V13 H21 Z" fill="#a9a9ad"/><path d="M25 0 H32 V8 H25 Z" fill="#a9a9ad" opacity=".8"/><path d="M25 9 H32 V15 H27" fill="none" stroke="#a9a9ad" stroke-width="1.6" opacity=".8"/>
<path d="M8.5 19 H1.5 V30.5 H8.5 M1.5 24.6 H7.5" stroke="#a9a9ad" stroke-width="2.4" fill="none"/>
<path d="M12.6 18 V31.6" stroke="#a9a9ad" stroke-width="2.4"/>
<path d="M17.6 31.6 V19 H23 a3.4 3.4 0 0 1 0 7.4 H17.6" stroke="#a9a9ad" stroke-width="2.4" fill="none"/></svg>
<div class="t" style="left:475px;top:195px;height:42px;line-height:42px;color:#9c9ca0;font-size:24px;">内置EtherNet/IP端口设置</div>
<svg style="left:787px;top:204px;" width="34" height="24" viewBox="0 0 34 24"><path d="M2 1 V22 H32 V1" stroke="#9c9ca0" stroke-width="2" fill="none"/><text x="17" y="17.5" font-size="17" font-weight="bold" text-anchor="middle" fill="#9c9ca0" font-family="Liberation Sans,sans-serif" letter-spacing="-0.6">var</text></svg>
<div class="t" style="left:827px;top:195px;height:42px;line-height:42px;color:#9c9ca0;font-size:24px;">全局变量</div>
<div class="t" style="left:970px;top:195px;height:42px;line-height:42px;color:#9c9ca0;font-size:24px;">EtherNet/IP设备列表</div>
<div class="t" style="left:1237px;top:195px;height:42px;line-height:42px;color:#fff;font-size:24px;">内置EtherNet/IP端口设置 连...</div>
<svg style="left:1566px;top:207px;" width="20" height="20" viewBox="0 0 20 20"><path d="M2 2 L18 18 M18 2 L2 18" stroke="#fff" stroke-width="2.6"/></svg>
<svg style="left:1599px;top:199px;" width="34" height="34" viewBox="0 0 34 34"><path d="M2 10 V2 H10 M24 2 H32 V10 M2 24 V32 H10 M24 32 H32 V24" stroke="#9c9ca0" stroke-width="2.4" fill="none"/>
<rect x="6" y="7" width="9" height="8" fill="#9c9ca0"/><rect x="20" y="8" width="9" height="7" fill="#9c9ca0"/><rect x="20" y="20" width="9" height="7" fill="#9c9ca0"/>
<path d="M15 11 H20 M17.5 11 V23.5 H20" stroke="#9c9ca0" stroke-width="2.2" fill="none"/></svg>
<div class="t" style="left:1640px;top:195px;height:42px;line-height:42px;color:#9c9ca0;font-size:24px;">数据类型</div>
<svg style="left:2624px;top:214px;" width="16" height="9" viewBox="0 0 16 9"><path d="M0 0 H16 L8 9 Z" fill="#fff"/></svg>
<div style="left:446px;top:256px;width:84px;height:85px;background:linear-gradient(#72747f,#5a5c68 45%,#3e404a);border:2px solid #000;box-shadow:inset 0 1px 0 #8c8e9a;"></div>
<svg style="left:446px;top:256px;" width="85" height="85" viewBox="0 0 85 85"><defs><linearGradient id="lg1" x1="0" y1="0" x2="0" y2="1"><stop offset="0" stop-color="#d4d4d6"/><stop offset="1" stop-color="#9a9a9e"/></linearGradient></defs>
<rect x="11" y="25" width="36" height="36" fill="url(#lg1)"/><rect x="23" y="29" width="10" height="28" fill="#50525c"/>
<rect x="53" y="38" width="8" height="9" fill="#b8b8bc"/><path d="M61 42.5 H73" stroke="#b8b8bc" stroke-width="2.4"/></svg>
<div style="left:446px;top:390px;width:84px;height:84px;background:#72b8f3;border:2px solid #000;"></div>
<svg style="left:446px;top:390px;" width="84" height="84" viewBox="0 0 84 84"><rect x="10" y="34" width="18" height="18" fill="#3a5796"/><rect x="16.8" y="36" width="4.6" height="14" fill="#8ec6f6"/>
<rect x="56" y="12.5" width="18" height="17.5" fill="#3a5796"/><rect x="63" y="14.5" width="4.6" height="13.5" fill="#8ec6f6"/>
<rect x="56" y="34" width="18" height="17.5" fill="#3a5796"/><rect x="63" y="36" width="4.6" height="13.5" fill="#8ec6f6"/>
<rect x="56" y="55.5" width="18" height="17.5" fill="#3a5796"/><rect x="63" y="57.5" width="4.6" height="13.5" fill="#8ec6f6"/>
<path d="M34 42.2 H48 M40.4 20.4 V64 M40.4 20.4 H48 M40.4 63.2 H48" stroke="#3a5796" stroke-width="1.7" fill="none"/>
<rect x="31" y="39.6" width="5.6" height="5.2" fill="#3a5796"/>
<rect x="46.5" y="17.8" width="6" height="5.2" fill="#3a5796"/><rect x="46.5" y="39.6" width="6" height="5.2" fill="#3a5796"/><rect x="46.5" y="60.6" width="6" height="5.2" fill="#3a5796"/></svg>
<div style="left:598px;top:251px;width:80px;height:80px;background:#72b8f3;border:2px solid #000;"></div>
<svg style="left:598px;top:251px;" width="80" height="80" viewBox="0 0 84 84"><rect x="10" y="34" width="18" height="18" fill="#3a5796"/><rect x="16.8" y="36" width="4.6" height="14" fill="#8ec6f6"/>
<rect x="56" y="12.5" width="18" height="17.5" fill="#3a5796"/><rect x="63" y="14.5" width="4.6" height="13.5" fill="#8ec6f6"/>
<rect x="56" y="34" width="18" height="17.5" fill="#3a5796"/><rect x="63" y="36" width="4.6" height="13.5" fill="#8ec6f6"/>
<rect x="56" y="55.5" width="18" height="17.5" fill="#3a5796"/><rect x="63" y="57.5" width="4.6" height="13.5" fill="#8ec6f6"/>
<path d="M34 42.2 H48 M40.4 20.4 V64 M40.4 20.4 H48 M40.4 63.2 H48" stroke="#3a5796" stroke-width="1.7" fill="none"/>
<rect x="31" y="39.6" width="5.6" height="5.2" fill="#3a5796"/>
<rect x="46.5" y="17.8" width="6" height="5.2" fill="#3a5796"/><rect x="46.5" y="39.6" width="6" height="5.2" fill="#3a5796"/><rect x="46.5" y="60.6" width="6" height="5.2" fill="#3a5796"/></svg>
<div class="t" style="left:692px;top:258px;height:56px;line-height:56px;color:#a4a4a8;font-size:40px;">连接</div>
<div style="left:588px;top:339px;width:2058px;height:4px;background:#000;"></div>
<div style="left:588px;top:353px;width:2058px;height:831px;border:2px solid #000;border-right-color:#111;"></div>
<div style="left:592px;top:358px;width:2050px;height:36px;background:linear-gradient(#70727e,#5c5e6a 40%,#3c3e47);border:2px solid #000;"></div>
<svg style="left:600px;top:368px;" width="20" height="16" viewBox="0 0 20 16"><path d="M0 0 H20 L10 16 Z" fill="#fff"/></svg>
<div class="t" style="left:627px;top:358px;height:36px;line-height:36px;color:#fff;font-size:24px;">连接</div>
<div class="t" style="left:622px;top:390px;height:36px;line-height:36px;color:#fff;font-size:24px;word-spacing:4px;">连接/最大: 2 / 32</div>
<div style="left:593px;top:424px;width:2049px;height:577px;border:4px solid #a0a0a0;border-radius:8px;"></div>
<div style="left:597px;top:428px;width:2042px;height:33px;background:#3a3a3f;"></div>
<div class="t" style="left:602px;top:426px;height:33px;line-height:33px;width:284px;text-align:center;color:#fff;font-size:25px;letter-spacing:-0.6px;">目标设备</div>
<div style="left:886px;top:434px;width:2px;height:18px;background:#fff;"></div>
<div class="t" style="left:888px;top:426px;height:33px;line-height:33px;width:158px;text-align:center;color:#fff;font-size:25px;letter-spacing:-0.6px;">连接名称</div>
<div style="left:1046px;top:434px;width:2px;height:18px;background:#fff;"></div>
<div class="t" style="left:1048px;top:426px;height:33px;line-height:33px;width:170px;text-align:center;color:#fff;font-size:25px;letter-spacing:-0.6px;">连接I/O类型</div>
<div style="left:1218px;top:434px;width:2px;height:18px;background:#fff;"></div>
<div class="t" style="left:1220px;top:426px;height:33px;line-height:33px;width:112px;text-align:center;color:#fff;font-size:25px;letter-spacing:-0.6px;">输入/输出</div>
<div style="left:1332px;top:434px;width:2px;height:18px;background:#fff;"></div>
<div class="t" style="left:1334px;top:426px;height:33px;line-height:33px;width:208px;text-align:center;color:#fff;font-size:25px;letter-spacing:-0.6px;">目标变量</div>
<div style="left:1542px;top:434px;width:2px;height:18px;background:#fff;"></div>
<div class="t" style="left:1544px;top:426px;height:33px;line-height:33px;width:124px;text-align:center;color:#fff;font-size:25px;letter-spacing:-0.6px;">大小[字节]</div>
<div style="left:1668px;top:434px;width:2px;height:18px;background:#fff;"></div>
<div class="t" style="left:1670px;top:426px;height:33px;line-height:33px;width:208px;text-align:center;color:#fff;font-size:25px;letter-spacing:-0.6px;">起始变量</div>
<div style="left:1878px;top:434px;width:2px;height:18px;background:#fff;"></div>
<div class="t" style="left:1880px;top:426px;height:33px;line-height:33px;width:124px;text-align:center;color:#fff;font-size:25px;letter-spacing:-0.6px;">大小[字节]</div>
<div style="left:2004px;top:434px;width:2px;height:18px;background:#fff;"></div>
<div class="t" style="left:2006px;top:426px;height:33px;line-height:33px;width:158px;text-align:center;color:#fff;font-size:25px;letter-spacing:-0.6px;">连接类型</div>
<div style="left:2164px;top:434px;width:2px;height:18px;background:#fff;"></div>
<div class="t" style="left:2166px;top:426px;height:33px;line-height:33px;width:92px;text-align:center;color:#fff;font-size:25px;letter-spacing:-0.6px;overflow:hidden;">RPI[毫秒]</div>
<div style="left:2258px;top:434px;width:2px;height:18px;background:#fff;"></div>
<div class="t" style="left:2260px;top:426px;height:33px;line-height:33px;width:116px;text-align:center;color:#fff;font-size:25px;letter-spacing:-0.6px;">超时值</div>
<div style="left:2376px;top:434px;width:2px;height:18px;background:#fff;"></div>
<div style="left:2633px;top:434px;width:2px;height:18px;background:#fff;"></div>
<div style="left:596px;top:460px;width:2043px;height:44px;background:#6a6a6c;"></div>
<div class="cell" style="left:596px;top:462px;width:284px;height:40px;line-height:40px;background:#72b8f3;padding-left:1px;">192.168.1.200 Elite Robot 版本</div>
<div class="cell" style="left:882px;top:462px;width:158px;height:40px;line-height:38px;background:#72b8f3;padding-left:13px;">default_001</div>
<div class="cell" style="left:1042px;top:462px;width:170px;height:40px;line-height:40px;background:#72b8f3;padding-left:1px;">Adapter Slot 0</div>
<div class="cell" style="left:1214px;top:462px;width:112px;height:40px;line-height:38px;background:#72b8f3;padding-left:13px;">输入</div>
<div class="cell" style="left:1328px;top:462px;width:208px;height:40px;line-height:38px;background:#72b8f3;padding-left:13px;">110</div>
<div class="cell" style="left:1538px;top:462px;width:124px;height:40px;line-height:38px;background:#72b8f3;padding-left:13px;">4</div>
<div class="cell" style="left:1664px;top:462px;width:208px;height:40px;line-height:40px;background:#72b8f3;padding-left:1px;">elite_9_OUT1</div>
<div class="cell" style="left:1874px;top:462px;width:124px;height:40px;line-height:38px;background:#72b8f3;padding-left:13px;">4</div>
<div class="cell" style="left:2000px;top:462px;width:158px;height:40px;line-height:40px;background:#72b8f3;padding-left:1px;">Multi-cast connection</div>
<div class="cell" style="left:2160px;top:462px;width:92px;height:40px;line-height:38px;background:#72b8f3;padding-left:14px;">50.0</div>
<div class="cell" style="left:2254px;top:462px;width:116px;height:40px;line-height:40px;background:#72b8f3;padding-left:1px;">RPI x 4</div>
<div class="cell" style="left:2372px;top:462px;width:265px;height:40px;line-height:40px;background:#72b8f3;padding-left:0px;"></div>
<div style="left:596px;top:502px;width:2043px;height:44px;background:#6a6a6c;"></div>
<div class="cell" style="left:596px;top:504px;width:284px;height:40px;line-height:40px;background:#acacac;padding-left:1px;"></div>
<div class="cell" style="left:882px;top:504px;width:158px;height:40px;line-height:38px;background:#acacac;padding-left:13px;"></div>
<div class="cell" style="left:1042px;top:504px;width:170px;height:40px;line-height:40px;background:#acacac;padding-left:1px;"></div>
<div class="cell" style="left:1214px;top:504px;width:112px;height:40px;line-height:38px;background:#72b8f3;padding-left:13px;">输出</div>
<div class="cell" style="left:1328px;top:504px;width:208px;height:40px;line-height:38px;background:#72b8f3;padding-left:13px;">140</div>
<div class="cell" style="left:1538px;top:504px;width:124px;height:40px;line-height:38px;background:#72b8f3;padding-left:13px;">64</div>
<div class="cell" style="left:1664px;top:504px;width:208px;height:40px;line-height:40px;background:#72b8f3;padding-left:1px;">elite_9_OUT</div>
<div class="cell" style="left:1874px;top:504px;width:124px;height:40px;line-height:38px;background:#72b8f3;padding-left:13px;">64</div>
<div class="cell" style="left:2000px;top:504px;width:158px;height:40px;line-height:40px;background:#72b8f3;padding-left:1px;">Point to Point connection</div>
<div class="cell" style="left:2160px;top:504px;width:92px;height:40px;line-height:38px;background:#acacac;padding-left:14px;"></div>
<div class="cell" style="left:2254px;top:504px;width:116px;height:40px;line-height:40px;background:#acacac;padding-left:1px;"></div>
<div class="cell" style="left:2372px;top:504px;width:265px;height:40px;line-height:40px;background:#72b8f3;padding-left:0px;"></div>
<div class="btn" style="left:612px;top:1021px;width:60px;height:50px;line-height:45px;font-size:24px;color:#e8e8e8;"></div>
<svg style="left:628px;top:1033px;" width="26" height="26" viewBox="0 0 20 20"><path d="M10 1 V19 M1 10 H19" stroke="#fff" stroke-width="4.6"/></svg>
<div class="btn" style="left:692px;top:1021px;width:60px;height:50px;line-height:45px;font-size:24px;color:#e8e8e8;"></div>
<svg style="left:709px;top:1029px;" width="26" height="33" viewBox="0 0 26 31"><path d="M10 3.5 H16" stroke="#c8c8cc" stroke-width="2"/><path d="M2 7.5 H24" stroke="#c8c8cc" stroke-width="2.4"/>
<path d="M4 10 H22 L20.5 29 Q20.4 30 19.4 30 H6.6 Q5.6 30 5.5 29 Z" fill="#c8c8cc"/>
<path d="M8.2 12 V27.5 M11.4 12 V27.5 M14.6 12 V27.5 M17.8 12 V27.5" stroke="#4a4c55" stroke-width="1.5"/></svg>
<div class="btn" style="left:612px;top:1111px;width:176px;height:49px;line-height:44px;font-size:24px;color:#e8e8e8;">设备带宽</div>
<div class="btn" style="left:828px;top:1111px;width:194px;height:49px;line-height:44px;font-size:24px;color:#e8e8e8;">显示EDS库</div>
<div class="btn" style="left:588px;top:1194px;width:240px;height:40px;line-height:35px;font-size:24px;color:#e8e8e8;">重启</div>
<div class="btn" style="left:2366px;top:1194px;width:240px;height:40px;line-height:35px;font-size:24px;color:#e8e8e8;">全部返回到默认值</div>
<div class="btn" style="left:1870px;top:1274px;width:240px;height:40px;line-height:35px;font-size:24px;color:#e8e8e8;">传送到控制器</div>
<div class="btn" style="left:2118px;top:1274px;width:240px;height:40px;line-height:35px;font-size:24px;color:#e8e8e8;">从控制器传送</div>
<div class="btn" style="left:2366px;top:1274px;width:240px;height:40px;line-height:35px;font-size:24px;color:#e8e8e8;">比较</div>
<div style="left:428px;top:1364px;width:2218px;height:43px;background:#72b8f3;"></div>
<div class="t" style="left:436px;top:1364px;height:42px;line-height:42px;color:#000;font-size:24px;">监视(工程)1</div>
<svg style="left:577px;top:1380px" width="1965" height="10" viewBox="0 0 1965 10"><defs><pattern id="dp2" width="8" height="8" patternUnits="userSpaceOnUse"><rect x="0" y="0" width="2" height="2" fill="#4a7fb4"/><rect x="4" y="4" width="2" height="2" fill="#4a7fb4"/></pattern></defs><rect width="1965" height="10" fill="url(#dp2)"/></svg>
<svg style="left:2556px;top:1385px;" width="16" height="9" viewBox="0 0 16 9"><path d="M0 0 H16 L8 9 Z" fill="#000"/></svg>
<svg style="left:2588px;top:1375px;" width="14" height="21" viewBox="0 0 14 21"><path d="M2 0 H12 V12 H14 V14 H8 V21 H6 V14 H0 V12 H2 Z M4 2 V12 H8 V2 Z" fill="#000" fill-rule="evenodd"/></svg>
<svg style="left:2619px;top:1376px;" width="18" height="18" viewBox="0 0 18 18"><path d="M2 2 L16 16 M16 2 L2 16" stroke="#000" stroke-width="2.8"/></svg>
<div style="left:428px;top:1406px;width:2218px;height:312px;background:#4b4b4f;"></div>
<div style="left:428px;top:1406px;width:2218px;height:2px;background:repeating-linear-gradient(90deg,#fff 0 2px,#000 2px 6px);"></div>
<div style="left:428px;top:1716px;width:2218px;height:2px;background:repeating-linear-gradient(90deg,#fff 0 2px,#000 2px 6px);"></div>
<div style="left:428px;top:1406px;width:2px;height:312px;background:repeating-linear-gradient(180deg,#fff 0 2px,#000 2px 6px);"></div>
<div style="left:2644px;top:1406px;width:2px;height:312px;background:repeating-linear-gradient(180deg,#fff 0 2px,#000 2px 6px);"></div>
<div style="left:434px;top:1409px;width:2207px;height:31px;background:#3a3a3f;"></div>
<div style="left:703px;top:1414px;width:2px;height:18px;background:#fff;"></div>
<div class="t" style="left:434px;top:1407px;height:33px;line-height:33px;width:271px;text-align:center;color:#fff;font-size:24px;">设备名称</div>
<div style="left:1103px;top:1414px;width:2px;height:18px;background:#fff;"></div>
<div class="t" style="left:705px;top:1407px;height:33px;line-height:33px;width:400px;text-align:center;color:#fff;font-size:24px;">名称</div>
<div style="left:1263px;top:1414px;width:2px;height:18px;background:#fff;"></div>
<div class="t" style="left:1105px;top:1407px;height:33px;line-height:33px;width:160px;text-align:center;color:#fff;font-size:24px;">在线值</div>
<div style="left:1463px;top:1414px;width:2px;height:18px;background:#fff;"></div>
<div class="t" style="left:1265px;top:1407px;height:33px;line-height:33px;width:200px;text-align:center;color:#fff;font-size:24px;">修改</div>
<div style="left:1763px;top:1414px;width:2px;height:18px;background:#fff;"></div>
<div class="t" style="left:1465px;top:1407px;height:33px;line-height:33px;width:300px;text-align:center;color:#fff;font-size:24px;">注释</div>
<div style="left:1963px;top:1414px;width:2px;height:18px;background:#fff;"></div>
<div class="t" style="left:1765px;top:1407px;height:33px;line-height:33px;width:200px;text-align:center;color:#fff;font-size:24px;">数据类型</div>
<div style="left:2263px;top:1414px;width:2px;height:18px;background:#fff;"></div>
<div class="t" style="left:1965px;top:1407px;height:33px;line-height:33px;width:300px;text-align:center;color:#fff;font-size:24px;">分配到</div>
<div style="left:2463px;top:1414px;width:2px;height:18px;background:#fff;"></div>
<div class="t" style="left:2265px;top:1407px;height:33px;line-height:33px;width:200px;text-align:center;color:#fff;font-size:24px;">显示格式</div>
<div style="left:2639px;top:1414px;width:2px;height:18px;background:#fff;"></div>
<div style="left:430px;top:1440px;width:2213px;height:40px;background:#505055;"></div>
<div style="left:704px;top:1440px;width:2px;height:40px;background:#0a0a0c;"></div>
<div style="left:1104px;top:1440px;width:2px;height:40px;background:#0a0a0c;"></div>
<div style="left:1264px;top:1440px;width:2px;height:40px;background:#0a0a0c;"></div>
<div style="left:1464px;top:1440px;width:2px;height:40px;background:#0a0a0c;"></div>
<div style="left:1764px;top:1440px;width:2px;height:40px;background:#0a0a0c;"></div>
<div style="left:1964px;top:1440px;width:2px;height:40px;background:#0a0a0c;"></div>
<div style="left:2264px;top:1440px;width:2px;height:40px;background:#0a0a0c;"></div>
<div style="left:2464px;top:1440px;width:2px;height:40px;background:#0a0a0c;"></div>
<div class="inp" style="left:446px;top:1444px;width:246px;height:32px;line-height:27px;padding-left:5px;letter-spacing:-0.2px;">new_Controller_0</div>
<div class="inp" style="left:754px;top:1444px;width:338px;height:32px;line-height:27px;padding-left:5px;">elite_9_OUT[912]</div>
<div style="left:1116px;top:1445px;width:136px;height:30px;background:#ff6347;"></div>
<div class="t" style="left:1116px;top:1445px;height:32px;line-height:32px;font-size:25px;color:#fff;">True</div>
<div class="btn" style="left:1276px;top:1441px;width:87px;height:38px;line-height:32px;font-size:21.5px;font-weight:bold;color:#0cf00c;letter-spacing:-0.6px;">TRUE</div>
<div class="btn" style="left:1363px;top:1441px;width:88px;height:38px;line-height:32px;font-size:21.5px;font-weight:bold;color:#e4e4e4;letter-spacing:-0.8px;">FALSE</div>
<div class="t" style="left:1776px;top:1440px;height:38px;line-height:38px;font-size:23px;color:#fff;">BOOL</div>
<div style="left:2277px;top:1446px;width:175px;height:28px;background:#6e7078;border:2px solid #9a9ca4;border-left-color:#222;border-top-color:#333;"></div><div style="left:2279px;top:1448px;width:131px;height:24px;background:linear-gradient(#74767e,#666870);"></div><div style="left:2410px;top:1448px;width:3px;height:24px;background:#2a2a2e;"></div><div style="left:2413px;top:1448px;width:37px;height:24px;background:linear-gradient(#686a76,#3c3e48);"></div><svg style="left:2423px;top:1454px;" width="15" height="12" viewBox="0 0 15 12"><path d="M0 0 H16 L8 13 Z" fill="#fff"/></svg><div class="t" style="left:2279px;top:1447px;height:24px;line-height:24px;width:131px;text-align:center;color:#fff;font-size:23px;">Boolean</div>
<div style="left:430px;top:1482px;width:2213px;height:40px;background:#72b8f3;"></div>
<div style="left:704px;top:1482px;width:2px;height:40px;background:#0a0a0c;"></div>
<div style="left:1104px;top:1482px;width:2px;height:40px;background:#0a0a0c;"></div>
<div style="left:1264px;top:1482px;width:2px;height:40px;background:#0a0a0c;"></div>
<div style="left:1464px;top:1482px;width:2px;height:40px;background:#0a0a0c;"></div>
<div style="left:1764px;top:1482px;width:2px;height:40px;background:#0a0a0c;"></div>
<div style="left:1964px;top:1482px;width:2px;height:40px;background:#0a0a0c;"></div>
<div style="left:2264px;top:1482px;width:2px;height:40px;background:#0a0a0c;"></div>
<div style="left:2464px;top:1482px;width:2px;height:40px;background:#0a0a0c;"></div>
<div class="inp" style="left:446px;top:1486px;width:246px;height:32px;line-height:27px;padding-left:5px;letter-spacing:-0.2px;">new_Controller_0</div>
<div class="inp" style="left:754px;top:1486px;width:338px;height:32px;line-height:27px;padding-left:5px;">elite_9_OUT[913]</div>
<div style="left:1116px;top:1487px;width:136px;height:30px;background:#ff6347;"></div>
<div class="t" style="left:1116px;top:1487px;height:32px;line-height:32px;font-size:25px;color:#000;">True</div>
<div class="btn" style="left:1276px;top:1483px;width:87px;height:38px;line-height:32px;font-size:21.5px;font-weight:bold;color:#0cf00c;letter-spacing:-0.6px;">TRUE</div>
<div class="btn" style="left:1363px;top:1483px;width:88px;height:38px;line-height:32px;font-size:21.5px;font-weight:bold;color:#e4e4e4;letter-spacing:-0.8px;">FALSE</div>
<div class="t" style="left:1776px;top:1482px;height:38px;line-height:38px;font-size:23px;color:#000;">BOOL</div>
<div style="left:2277px;top:1488px;width:175px;height:28px;background:#6e7078;border:2px solid #9a9ca4;border-left-color:#222;border-top-color:#333;"></div><div style="left:2279px;top:1490px;width:131px;height:24px;background:linear-gradient(#74767e,#666870);"></div><div style="left:2410px;top:1490px;width:3px;height:24px;background:#2a2a2e;"></div><div style="left:2413px;top:1490px;width:37px;height:24px;background:linear-gradient(#686a76,#3c3e48);"></div><svg style="left:2423px;top:1496px;" width="15" height="12" viewBox="0 0 15 12"><path d="M0 0 H16 L8 13 Z" fill="#fff"/></svg><div class="t" style="left:2279px;top:1489px;height:24px;line-height:24px;width:131px;text-align:center;color:#fff;font-size:23px;">Boolean</div>
<div style="left:430px;top:1524px;width:2213px;height:40px;background:#505055;"></div>
<div style="left:704px;top:1524px;width:2px;height:40px;background:#0a0a0c;"></div>
<div style="left:1104px;top:1524px;width:2px;height:40px;background:#0a0a0c;"></div>
<div style="left:1264px;top:1524px;width:2px;height:40px;background:#0a0a0c;"></div>
<div style="left:1464px;top:1524px;width:2px;height:40px;background:#0a0a0c;"></div>
<div style="left:1764px;top:1524px;width:2px;height:40px;background:#0a0a0c;"></div>
<div style="left:1964px;top:1524px;width:2px;height:40px;background:#0a0a0c;"></div>
<div style="left:2264px;top:1524px;width:2px;height:40px;background:#0a0a0c;"></div>
<div style="left:2464px;top:1524px;width:2px;height:40px;background:#0a0a0c;"></div>
<div class="inp" style="left:446px;top:1528px;width:246px;height:32px;line-height:27px;padding-left:5px;letter-spacing:-0.2px;">new_Controller_0</div>
<div style="left:754px;top:1528px;width:338px;height:32px;line-height:27px;padding-left:5px;border:2px solid #a0a0a0;color:#8c8c90;font-style:italic;font-size:23px;white-space:nowrap;">输入名称...</div>
<div style="left:693px;top:1367px;width:791px;height:228px;border:4px solid #ff1e12;border-radius:2px;"></div>
<div style="left:428px;top:1720px;width:64px;height:38px;background:#4f4f54;"></div>
<div class="t" style="left:428px;top:1719px;height:38px;line-height:38px;width:64px;text-align:center;color:#9a9a9e;font-size:24px;">编译</div>
<div style="left:496px;top:1717px;width:144px;height:43px;background:#72b8f3;"></div>
<div class="t" style="left:496px;top:1718px;height:40px;line-height:40px;width:144px;text-align:center;color:#000;font-size:24px;">监视(工程)1</div>
<div style="left:644px;top:1720px;width:64px;height:38px;background:#4f4f54;"></div>
<div class="t" style="left:644px;top:1719px;height:38px;line-height:38px;width:64px;text-align:center;color:#9a9a9e;font-size:24px;">输出</div>
<div style="left:0px;top:1774px;width:3072px;height:2px;background:#b0b0b0;"></div>
<div style="left:0px;top:1776px;width:3072px;height:48px;background:#1f1f21;"></div>
<div style="left:0px;top:1824px;width:3072px;height:8px;background:linear-gradient(#a9caca 0,#a9caca 1px,#cdf2f4 2px,#cff3f5);"></div>
<div style="left:3072px;top:46px;width:2px;height:1786px;background:#efefef;"></div>
<div class="hdr" style="left:2662px;top:191px;width:396px;height:43px;"></div>
<div class="t" style="left:2670px;top:194px;height:40px;line-height:40px;font-size:24px;color:#fff;text-shadow:0 0 1px #fff;">工具箱</div>
<svg style="left:2757px;top:207px" width="228" height="10" viewBox="0 0 228 10"><defs><pattern id="dp3" width="8" height="8" patternUnits="userSpaceOnUse"><rect x="0" y="0" width="2" height="2" fill="#9a9a9a"/><rect x="4" y="4" width="2" height="2" fill="#9a9a9a"/></pattern></defs><rect width="228" height="10" fill="url(#dp3)"/></svg>
<svg style="left:2999px;top:211px;" width="16" height="9" viewBox="0 0 16 9"><path d="M0 0 H16 L8 9 Z" fill="#fff"/></svg>
<svg style="left:3032px;top:202px;" width="14" height="21" viewBox="0 0 14 21"><path d="M2 0 H12 V12 H14 V14 H8 V21 H6 V14 H0 V12 H2 Z M4 2 V12 H8 V2 Z" fill="#fff" fill-rule="evenodd"/></svg>
<div style="left:2662px;top:235px;width:396px;height:349px;background:#4b4b4f;"></div>
<div style="left:2666px;top:237px;width:388px;height:265px;background:#4b4b4f;border:2px solid #000;"></div>
<div style="left:2668px;top:239px;width:384px;height:34px;background:#3a3a3f;border-top:2px solid #fff;border-right:2px solid #fff;"></div>
<div class="t" style="left:2668px;top:242px;height:34px;line-height:34px;font-size:24px;color:#fff;">目标设备</div>
<div style="left:2670px;top:274px;width:380px;height:30px;background:#72b8f3;"></div>
<svg style="left:2707px;top:273px;" width="32" height="32" viewBox="0 0 32 32"><path d="M1 2 H9.5 L12 5 H17.5 V14 H1 Z" fill="#24339a"/><path d="M22 7.5 H29 V12.5 M26.4 10.6 L29 13.6 L31.6 10.6" stroke="#2c4fa0" stroke-width="1.7" fill="none"/>
<rect x="10.5" y="16" width="21" height="4" fill="#2c4fa0"/><path d="M10.5 22.5 H14 M16.5 22.5 H31.5 M10.5 26 H14 M16.5 26 H31.5 M10.5 29.5 H14 M16.5 29.5 H31.5" stroke="#2c4fa0" stroke-width="1.8"/></svg>
<div class="t" style="left:2740px;top:273px;height:32px;line-height:32px;font-size:25px;color:#000;letter-spacing:-0.1px;">192.168.1.200&nbsp;&nbsp;&nbsp;Elite Robot</div>
<div class="btn" style="left:2672px;top:513px;width:60px;height:50px;line-height:45px;font-size:24px;color:#e8e8e8;"></div>
<svg style="left:2686px;top:521px;" width="32" height="34" viewBox="0 0 32 34"><path d="M1 3 H8 L10 6 H17 V14 H1 Z" fill="#a8a8ac"/><path d="M20 9 H28 V15 M25.5 12.5 L28 15.5 L30.5 12.5" stroke="#a8a8ac" stroke-width="1.8" fill="none"/>
<rect x="10" y="17" width="21" height="4" fill="#a8a8ac"/><path d="M10 24 H14 M16 24 H31 M10 28 H14 M16 28 H31 M10 32 H14 M16 32 H31" stroke="#a8a8ac" stroke-width="2"/></svg>
<div class="btn" style="left:2742px;top:513px;width:60px;height:50px;line-height:45px;font-size:24px;color:#e8e8e8;"></div>
<svg style="left:2759px;top:525px;" width="26" height="26" viewBox="0 0 20 20"><path d="M10 1 V19 M1 10 H19" stroke="#fff" stroke-width="4.6"/></svg>
<div class="btn" style="left:2812px;top:513px;width:60px;height:50px;line-height:45px;font-size:24px;color:#e8e8e8;"></div>
<svg style="left:2829px;top:521px;" width="26" height="33" viewBox="0 0 26 31"><path d="M10 3.5 H16" stroke="#c8c8cc" stroke-width="2"/><path d="M2 7.5 H24" stroke="#c8c8cc" stroke-width="2.4"/>
<path d="M4 10 H22 L20.5 29 Q20.4 30 19.4 30 H6.6 Q5.6 30 5.5 29 Z" fill="#c8c8cc"/>
<path d="M8.2 12 V27.5 M11.4 12 V27.5 M14.6 12 V27.5 M17.8 12 V27.5" stroke="#4a4c55" stroke-width="1.5"/></svg>
<div style="left:2662px;top:583px;width:396px;height:6px;background:#333335;"></div>
<div style="left:2664px;top:591px;width:394px;height:695px;background:#4b4b4f;"></div>
<div style="left:2668px;top:591px;width:388px;height:32px;background:#3a3a3f;"></div>
<div class="t" style="left:2668px;top:590px;height:32px;line-height:32px;width:198px;text-align:center;font-size:24px;color:#fff;">变量名</div>
<div style="left:2867px;top:598px;width:2px;height:17px;background:#fff;"></div>
<div class="t" style="left:2870px;top:590px;height:32px;line-height:32px;width:186px;text-align:center;font-size:24px;color:#fff;">大小[字节]</div>
<div style="left:2662px;top:1288px;width:396px;height:60px;background:#4b4b4f;"></div>
<div class="btn" style="left:2672px;top:1298px;width:138px;height:40px;line-height:34px;font-size:24px;color:#7e8088;background:linear-gradient(#60626e,#4e505a 45%,#3e4049);">导入标签组</div>
<div class="hdr" style="left:2662px;top:1364px;width:396px;height:43px;"></div>
<div class="t" style="left:2670px;top:1366px;height:42px;line-height:42px;font-size:24px;color:#fff;text-shadow:0 0 1px #fff;">控制器状态</div>
<svg style="left:2803px;top:1380px" width="180" height="10" viewBox="0 0 180 10"><defs><pattern id="dp4" width="8" height="8" patternUnits="userSpaceOnUse"><rect x="0" y="0" width="2" height="2" fill="#9a9a9a"/><rect x="4" y="4" width="2" height="2" fill="#9a9a9a"/></pattern></defs><rect width="180" height="10" fill="url(#dp4)"/></svg>
<svg style="left:2999px;top:1384px;" width="16" height="9" viewBox="0 0 16 9"><path d="M0 0 H16 L8 9 Z" fill="#fff"/></svg>
<svg style="left:3032px;top:1375px;" width="14" height="21" viewBox="0 0 14 21"><path d="M2 0 H12 V12 H14 V14 H8 V21 H6 V14 H0 V12 H2 Z M4 2 V12 H8 V2 Z" fill="#fff" fill-rule="evenodd"/></svg>
<div style="left:2662px;top:1407px;width:396px;height:39px;background:linear-gradient(#4e4f52 0%,#434447 40%,#181b1d 56%,#1c2022 100%);border-radius:7px 7px 0 0;border:1px solid #111;"></div>
<svg style="left:2985px;top:1410px;" width="34" height="34" viewBox="0 0 34 34"><rect x="2" y="2" width="30" height="30" fill="#3a3b3e" stroke="#8a8a8c" stroke-width="2.5"/><path d="M8 26 L23 11" stroke="#b0b0b2" stroke-width="4"/><path d="M12 8 H26 V22 Z" fill="#b0b0b2"/></svg>
<svg style="left:3028px;top:1417px;" width="22" height="22" viewBox="0 0 22 22"><path d="M2 2 L20 20 M20 2 L2 20" stroke="#77787a" stroke-width="4"/></svg>
<div style="left:2662px;top:1446px;width:396px;height:2px;background:#8a8a8c;"></div>
<div style="left:2662px;top:1448px;width:396px;height:312px;background:#4b4b4f;"></div>
<div style="left:2670px;top:1456px;width:380px;height:62px;background:#47474b;border:2px solid #0c0c0e;"></div>
<div class="t" style="left:2676px;top:1457px;height:30px;line-height:30px;width:108px;text-align:right;font-size:24px;color:#fff;">在线</div>
<div class="t" style="left:2676px;top:1488px;height:30px;line-height:30px;width:108px;text-align:right;font-size:25px;color:#fff;letter-spacing:-0.7px;">ERR/ALM</div>
<div style="left:2809px;top:1460px;width:20px;height:20px;background:#2ecc6e;border-radius:50%;"></div>
<div style="left:2809px;top:1491px;width:20px;height:20px;background:#2ecc6e;border-radius:50%;"></div>
<div class="t" style="left:2895px;top:1457px;height:30px;line-height:30px;font-size:25px;color:#fff;letter-spacing:-0.1px;">192.168.1.11</div>
<div class="t" style="left:2895px;top:1489px;height:30px;line-height:30px;font-size:24px;color:#fff;">运行模式</div>
<svg width="0" height="0" style="left:0;top:0"><defs><linearGradient id="ig" x1="0" y1="0" x2="0" y2="1"><stop offset="0" stop-color="#dedee0"/><stop offset="1" stop-color="#a2a2a6"/></linearGradient></defs></svg>
<svg style="left:35px;top:116px;" width="34" height="34" viewBox="0 0 34 34"><path d="M9.6 3 Q11.8 2.6 12.6 4.4 L20.6 23 L18 24.4 L9.4 5.6 Z" fill="url(#ig)"/>
<path d="M24.4 3 Q22.2 2.6 21.4 4.4 L13.4 23 L16 24.4 L24.6 5.6 Z" fill="url(#ig)"/>
<ellipse cx="12.2" cy="26.6" rx="2.7" ry="4.4" transform="rotate(22 12.2 26.6)" fill="none" stroke="#c0c0c4" stroke-width="2"/>
<ellipse cx="21.8" cy="26.6" rx="2.7" ry="4.4" transform="rotate(-22 21.8 26.6)" fill="none" stroke="#c0c0c4" stroke-width="2"/></svg>
<svg style="left:94px;top:116px;" width="34" height="34" viewBox="0 0 34 34"><path d="M12 12 H29 V31 H11 V28 H25 V12 Z" fill="#a9a9ad"/><path d="M11 4 H24 V27 H5 V10 Z" fill="url(#ig)"/><path d="M5 8.5 L9.5 4 V8.5 Z" fill="url(#ig)" opacity=".75"/></svg>
<svg style="left:154px;top:116px;" width="34" height="34" viewBox="0 0 34 34"><path d="M5 7 H10 V5 Q10 3 12 3 H17 Q19 3 19 5 V7 H24 V12 H16 L11 17 V28 H5 Z" fill="#a4a4a8"/><rect x="11.5" y="4.6" width="6" height="2.4" fill="#414141"/><path d="M18.0 13 H29.5 V32 H12.5 V18.5 Z" fill="url(#ig)"/><path d="M12.5 17.0 L16.5 13 V17.0 Z" fill="url(#ig)" opacity=".75"/></svg>
<svg style="left:214px;top:116px;" width="34" height="34" viewBox="0 0 34 34"><path d="M13.5 4.2 H20.5" stroke="#c8c8cc" stroke-width="2.2"/><path d="M6 8.6 H28" stroke="#cfcfd3" stroke-width="2.6"/>
<path d="M8 11 H26 L24.4 30 Q24.3 31 23.3 31 H10.7 Q9.7 31 9.6 30 Z" fill="url(#ig)"/>
<path d="M12 13.5 V28.5 M15.4 13.5 V28.5 M18.6 13.5 V28.5 M22 13.5 V28.5" stroke="#414141" stroke-width="1.6"/></svg>
<svg style="left:274px;top:116px;" width="34" height="34" viewBox="0 0 34 34"><path d="M2 11 L14 3.5 V18.5 Z" fill="#7f7f81"/><path d="M13 11 H21.5 A8.3 8.3 0 0 1 21.5 27.6 H12.5" fill="none" stroke="#7f7f81" stroke-width="4"/></svg>
<svg style="left:335px;top:116px;" width="34" height="34" viewBox="0 0 34 34"><path d="M32 11 L20 3.5 V18.5 Z" fill="#7f7f81"/><path d="M21 11 H12.5 A8.3 8.3 0 0 0 12.5 27.6 H21.5" fill="none" stroke="#7f7f81" stroke-width="4"/></svg>
<svg style="left:395px;top:116px;" width="34" height="34" viewBox="0 0 34 34"><path d="M11 4 H29 V31 H5 V10 Z" fill="url(#ig)"/><path d="M5 8.5 L9.5 4 V8.5 Z" fill="url(#ig)" opacity=".75"/><text x="17.5" y="26" font-size="20" font-weight="bold" text-anchor="middle" fill="#414141" font-family="Liberation Sans,sans-serif">?</text></svg>
<svg style="left:483px;top:116px;" width="34" height="34" viewBox="0 0 34 34"><rect x="3.2" y="6.2" width="27.6" height="22.6" rx="1" fill="none" stroke="#c4c4c8" stroke-width="2.2"/><path d="M3 6.6 H31" stroke="#d4d4d8" stroke-width="3.4"/><text x="17" y="25.5" font-size="16.5" font-weight="bold" text-anchor="middle" fill="#c6c6ca" font-family="Liberation Sans,sans-serif" letter-spacing="-0.5">3D</text></svg>
<svg style="left:543px;top:116px;" width="34" height="34" viewBox="0 0 34 34"><path d="M13.5 9 H20 M31 13 V22 H27" fill="none" stroke="#bcbcc0" stroke-width="2.2"/><path d="M13.6 8 V16" stroke="#bcbcc0" stroke-width="2.2"/>
<rect x="20" y="4" width="11.5" height="9" fill="#c8c8cc"/><rect x="23.5" y="6" width="6" height="2.2" fill="#414141"/>
<rect x="4.2" y="17.2" width="19.6" height="13.6" fill="none" stroke="#c8c8cc" stroke-width="2.4"/><path d="M4 18 H24" stroke="#c8c8cc" stroke-width="3.4"/></svg>
<svg style="left:602px;top:116px;" width="34" height="34" viewBox="0 0 34 34"><path d="M16.4 3.6 L21.6 8.8 L17.4 13.6 Q10.6 13.4 7.6 24.6 L4.8 23.6 Q5.6 10.6 16.4 3.6 Z" fill="url(#ig)"/><path d="M14.8 15 L18.8 11 L31.4 26 L27.2 30.4 Z" fill="url(#ig)"/></svg>
<svg style="left:662px;top:116px;" width="34" height="34" viewBox="0 0 34 34"><rect x="4" y="18.5" width="11.5" height="12.5" fill="#b0b0b4"/><rect x="18.5" y="18.5" width="11.5" height="12.5" fill="#b0b0b4"/>
<path d="M6 4 L27 27 M28 4 L7 27" stroke="#414141" stroke-width="5.5"/>
<path d="M7 5 L27 27 M27 5 L7 27" stroke="#d0d0d4" stroke-width="2.2"/>
<path d="M4.5 3 H12 L4.5 10.5 Z M29.5 3 H22 L29.5 10.5 Z" fill="#d0d0d4"/></svg>
<svg style="left:722px;top:116px;" width="34" height="34" viewBox="0 0 34 34"><path d="M3 6 H30" stroke="#c8c8cc" stroke-width="3.2"/><path d="M4 6 V28" stroke="#c8c8cc" stroke-width="2"/><g transform="translate(8.2,12.6) scale(0.857)" fill="none" stroke="#c4c4c8" stroke-width="2.3"><circle cx="6.8" cy="15" r="5"/><circle cx="21.2" cy="15" r="5"/><path d="M11.6 13.8 Q14 11.8 16.4 13.8 M1.6 13.4 L4.8 1.2 H8.6 M26.4 13.4 L23.2 1.2 H19.4 M0 14 H2 M26 14 H28"/></g></svg>
<svg style="left:783px;top:116px;" width="34" height="34" viewBox="0 0 34 34"><rect x="3" y="4" width="25" height="4.4" fill="#c8c8cc"/><path d="M4 8 V26 H13 M11.5 8 V26 M4 14 H28 M4 20 H16 M27 8 V14" fill="none" stroke="#c0c0c4" stroke-width="2"/><g transform="translate(13,18) scale(0.643)" fill="none" stroke="#c4c4c8" stroke-width="2.6"><circle cx="6.8" cy="15" r="5"/><circle cx="21.2" cy="15" r="5"/><path d="M11.6 13.8 Q14 11.8 16.4 13.8 M1.6 13.4 L4.8 1.2 H8.6 M26.4 13.4 L23.2 1.2 H19.4 M0 14 H2 M26 14 H28"/></g></svg>
<svg style="left:843px;top:116px;" width="34" height="34" viewBox="0 0 34 34"><g transform="translate(7.8,3) scale(0.7)" fill="none" stroke="#c4c4c8" stroke-width="2.6"><circle cx="6.8" cy="15" r="5"/><circle cx="21.2" cy="15" r="5"/><path d="M11.6 13.8 Q14 11.8 16.4 13.8 M1.6 13.4 L4.8 1.2 H8.6 M26.4 13.4 L23.2 1.2 H19.4 M0 14 H2 M26 14 H28"/></g><path d="M3 30 H8.5 V21 H13 V30 H17.5 V21 H22 V30 H26.5 V21 H30.5" fill="none" stroke="#c4c4c8" stroke-width="2"/></svg>
<svg style="left:903px;top:116px;" width="34" height="34" viewBox="0 0 34 34"><path d="M8 4 H14 V7 H8 Z M20 4 H26 V7 H20 Z" fill="#c8c8cc"/>
<path d="M8.5 8 H14.5 V16 H19.5 V8 H25.5 L31 24 V31 H19.5 V22 H14.5 V31 H3 V24 Z" fill="url(#ig)"/><rect x="15" y="16.5" width="4" height="4" fill="#414141"/></svg>
<svg style="left:963px;top:116px;" width="34" height="34" viewBox="0 0 34 34"><path d="M6 3 H27 Q29 3 29 5 V24 L22 31 H6 Q4 31 4 29 V5 Q4 3 6 3 Z" fill="#c6c6ca"/><path d="M29 24 H22 V31 Z" fill="#8c8c90"/>
<circle cx="16.5" cy="13.5" r="9.6" fill="#c8141e"/><path d="M16.5 7.5 V15.5" stroke="#fff" stroke-width="3.4" stroke-linecap="round"/><circle cx="16.5" cy="19.6" r="1.9" fill="#fff"/></svg>
<svg style="left:1050px;top:116px;" width="34" height="34" viewBox="0 0 34 34"><rect x="3" y="4" width="14" height="4.6" fill="#7f7f81"/><rect x="19" y="4" width="5" height="4.6" fill="#7f7f81"/><path d="M3 11 H14 V15 L8 21 V24 H3 Z" fill="#7f7f81"/>
<path d="M20.6 8.4 L24.6 12.4 L21.4 16 Q16.4 16 14.2 24 L12 23.2 Q12.6 13.6 20.6 8.4 Z" fill="#7f7f81"/><path d="M19.4 17.2 L22.4 14.2 L32 25.6 L28.8 29 Z" fill="#7f7f81"/></svg>
<svg style="left:1138px;top:116px;" width="34" height="34" viewBox="0 0 34 34"><path d="M17 4 L31 29 H3 Z" fill="#a8952c" stroke="#a8952c" stroke-width="2" stroke-linejoin="round"/><path d="M18.6 11 L13 19.4 H17 L14.6 26.4 L21.4 17 H17.4 L20.4 11 Z" fill="#3a3a34"/></svg>
<svg style="left:1198px;top:116px;" width="34" height="34" viewBox="0 0 34 34"><path d="M19 4 L32 28 H6 Z" fill="#ecd91c" stroke="#ecd91c" stroke-width="2" stroke-linejoin="round"/><path d="M20.4 11 L15.4 18.6 H19 L17 25 L23 16.6 H19.4 L22 11 Z" fill="#5a5420"/>
<path d="M5 5 L29 30" stroke="#414141" stroke-width="6.5"/><path d="M5 5 L29 30" stroke="#c4c4c8" stroke-width="3.2"/></svg>
<svg style="left:1258px;top:116px;" width="34" height="34" viewBox="0 0 34 34"><g transform="translate(4,7) scale(1.0)" fill="none" stroke="#7f7f81" stroke-width="2.3"><circle cx="6.8" cy="15" r="5"/><circle cx="21.2" cy="15" r="5"/><path d="M11.6 13.8 Q14 11.8 16.4 13.8 M1.6 13.4 L4.8 1.2 H8.6 M26.4 13.4 L23.2 1.2 H19.4 M0 14 H2 M26 14 H28"/></g></svg>
<svg style="left:1318px;top:116px;" width="34" height="34" viewBox="0 0 34 34"><g transform="translate(8.2,2.8) scale(0.857)" fill="none" stroke="#c4c4c8" stroke-width="2.4"><circle cx="6.8" cy="15" r="5"/><circle cx="21.2" cy="15" r="5"/><path d="M11.6 13.8 Q14 11.8 16.4 13.8 M1.6 13.4 L4.8 1.2 H8.6 M26.4 13.4 L23.2 1.2 H19.4 M0 14 H2 M26 14 H28"/></g><path d="M5 18.4 L17.8 30.6 M17.8 18.4 L5 30.6" stroke="#e8102a" stroke-width="4"/></svg>
<svg style="left:1378px;top:116px;" width="34" height="34" viewBox="0 0 34 34"><path d="M7.5 3 H17 V20 H3 V7.5 Z" fill="#7f7f81"/><path d="M3 6.0 L6.0 3 V6.0 Z" fill="#7f7f81" opacity=".75"/><path d="M5.5 10 H15 M5.5 13.5 H15 M5.5 17 H15 M8.6 9 V19" stroke="#414141" stroke-width="1.2"/><path d="M15 12 L32 21.5 L15 31 Z" fill="#7f7f81" stroke="#414141" stroke-width="1.2"/></svg>
<svg style="left:1438px;top:116px;" width="34" height="34" viewBox="0 0 34 34"><path d="M7.5 3 H18 V21 H3 V7.5 Z" fill="#c4c4c8"/><path d="M3 6.0 L6.0 3 V6.0 Z" fill="#c4c4c8" opacity=".75"/><path d="M5.5 10 H16 M5.5 13.5 H16 M5.5 17 H16 M9 9 V20" stroke="#414141" stroke-width="1.2"/><rect x="14.5" y="14" width="17.5" height="17" fill="url(#ig)" stroke="#414141" stroke-width="1.2"/></svg>
<svg style="left:1498px;top:116px;" width="34" height="34" viewBox="0 0 34 34"><path d="M6.2 21 A11.4 11.4 0 0 1 22 6.6" fill="none" stroke="#cdcdd1" stroke-width="5"/><path d="M27.8 13 A11.4 11.4 0 0 1 12 27.4" fill="none" stroke="#bdbdc1" stroke-width="5"/>
<path d="M18.5 1.6 L28.5 8 L19 13 Z" fill="#cdcdd1"/><path d="M15.5 32.4 L5.5 26 L15 21 Z" fill="#bdbdc1"/></svg>
<svg style="left:1558px;top:116px;" width="34" height="34" viewBox="0 0 34 34"><rect x="2.4" y="3.4" width="15.2" height="11.2" rx="1" fill="none" stroke="#c8c8cc" stroke-width="2.4"/><path d="M10 15 V18 M5 19 H15" stroke="#c8c8cc" stroke-width="2.4"/>
<path d="M21 8 H27.5 V17" fill="none" stroke="#c8c8cc" stroke-width="2"/><path d="M24.4 15.4 H30.6 L27.5 19.4 Z" fill="#c8c8cc"/>
<rect x="13" y="23" width="4.6" height="8" fill="#c8c8cc"/><rect x="19.6" y="23" width="4.6" height="8" fill="#c8c8cc"/><rect x="26" y="23" width="4.6" height="8" fill="#c8c8cc"/></svg>
<svg style="left:1618px;top:116px;" width="34" height="34" viewBox="0 0 34 34"><rect x="15.4" y="3.4" width="15.2" height="11.2" rx="1" fill="none" stroke="#c8c8cc" stroke-width="2.4"/><path d="M23 15 V18 M18 19 H28" stroke="#c8c8cc" stroke-width="2.4"/>
<path d="M5.5 20 V9 H9" fill="none" stroke="#c8c8cc" stroke-width="2"/><path d="M8 5.8 V12.2 L12 9 Z" fill="#c8c8cc"/>
<rect x="3" y="23" width="4.6" height="8" fill="#c8c8cc"/><rect x="9.6" y="23" width="4.6" height="8" fill="#c8c8cc"/><rect x="16" y="23" width="4.6" height="8" fill="#c8c8cc"/></svg>
<svg style="left:1706px;top:116px;" width="34" height="34" viewBox="0 0 34 34"><path d="M3 9.5 V3.5 H9 M25 3.5 H31 V9.5 M3 24.5 V30.5 H9 M25 30.5 H31 V24.5" fill="none" stroke="#8a8a8c" stroke-width="2.2"/><rect x="8.2" y="8.7" width="17.6" height="16.6" fill="none" stroke="#8a8a8c" stroke-width="2.6"/></svg>
<svg style="left:1766px;top:116px;" width="34" height="34" viewBox="0 0 34 34"><circle cx="14" cy="14" r="9.4" fill="none" stroke="#8a8a8c" stroke-width="4"/><path d="M21 21 L29.5 29.5" stroke="#8a8a8c" stroke-width="5" stroke-linecap="round"/><path d="M9 14 H19 M14 9 V19" stroke="#8a8a8c" stroke-width="2.6"/></svg>
<svg style="left:1826px;top:116px;" width="34" height="34" viewBox="0 0 34 34"><circle cx="14" cy="14" r="9.4" fill="none" stroke="#8a8a8c" stroke-width="4"/><path d="M21 21 L29.5 29.5" stroke="#8a8a8c" stroke-width="5" stroke-linecap="round"/><path d="M9 14 H19" stroke="#8a8a8c" stroke-width="2.6"/></svg>
<svg style="left:1886px;top:116px;" width="34" height="34" viewBox="0 0 34 34"><path d="M3.5 3 V14" stroke="#8a8a8c" stroke-width="2.2"/><ellipse cx="10" cy="8.5" rx="2.7" ry="5" fill="none" stroke="#8a8a8c" stroke-width="2.2"/><ellipse cx="18.6" cy="8.5" rx="2.7" ry="5" fill="none" stroke="#8a8a8c" stroke-width="2.2"/>
<circle cx="20" cy="21.6" r="5.6" fill="none" stroke="#8a8a8c" stroke-width="2.8"/><path d="M24.4 26 L30 31.6" stroke="#8a8a8c" stroke-width="3.4" stroke-linecap="round"/></svg>
<svg style="left:1974px;top:116px;" width="34" height="34" viewBox="0 0 34 34"><path d="M15 26.4 H12 A9.6 9.6 0 0 1 12 7.2 H24" fill="none" stroke="#7f7f81" stroke-width="3"/><path d="M22 2.4 L30.6 7.2 L22 12 Z" fill="#7f7f81"/>
<path d="M11 12.5 V21" stroke="#7f7f81" stroke-width="2"/><path d="M15 14.5 L30 23 L15 31.5 Z" fill="#7f7f81" stroke="#414141" stroke-width="1.2"/><path d="M27.4 15.4 L30.6 13.6 V17.4 Z" fill="#7f7f81"/></svg>
<svg style="left:2034px;top:116px;" width="34" height="34" viewBox="0 0 34 34"><path d="M15 26.4 H12 A9.6 9.6 0 0 1 12 7.2 H24" fill="none" stroke="#7f7f81" stroke-width="3"/><path d="M22 2.4 L30.6 7.2 L22 12 Z" fill="#7f7f81"/>
<path d="M14 15 V21" stroke="#7f7f81" stroke-width="2"/><rect x="16.6" y="16.6" width="14.4" height="14.4" fill="#7f7f81" stroke="#414141" stroke-width="1.2"/></svg>
</body></html>
